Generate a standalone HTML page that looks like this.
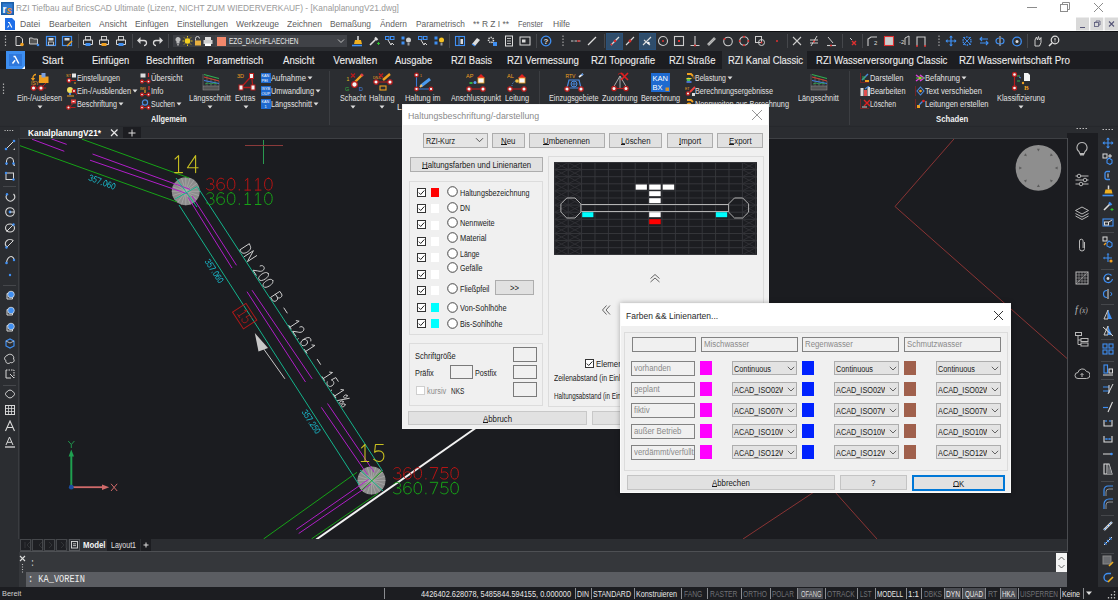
<!DOCTYPE html>
<html><head><meta charset="utf-8">
<style>
html,body{margin:0;padding:0;}
body{width:1118px;height:600px;overflow:hidden;position:relative;background:#1b1c20;font-family:"Liberation Sans",sans-serif;}
.r{position:absolute;}
.t{position:absolute;white-space:nowrap;line-height:1;transform-origin:0 0;}
svg{position:absolute;overflow:hidden;}
</style></head><body>
<div class="r" style="left:0px;top:0px;width:1118px;height:31px;background:#ffffff;"></div>
<svg style="left:1px;top:2px" width="13" height="13" viewBox="0 0 13 13"><rect x="0" y="0" width="13" height="13" fill="#1d5fa8"/><rect x="1.5" y="1.5" width="10" height="10" fill="#2f7bd0"/><text x="1.5" y="11" font-family="Liberation Sans" font-weight="bold" font-size="10" fill="#fff">r</text><text x="5.5" y="11.5" font-family="Liberation Sans" font-weight="bold" font-style="italic" font-size="10" fill="#f08a20">s</text></svg>
<div class="t" style="left:16.0px;top:3.9px;font-size:9px;color:#9a9a9a;transform:scaleX(0.931);">RZI Tiefbau auf BricsCAD Ultimate (Lizenz, NICHT ZUM WIEDERVERKAUF) - [KanalplanungV21.dwg]</div>
<svg style="left:1020px;top:0px" width="98" height="16" viewBox="0 0 98 16"><line x1="7" y1="7.5" x2="17" y2="7.5" stroke="#8c8c8c" stroke-width="1"/><rect x="40.5" y="4.5" width="7" height="7" fill="none" stroke="#8c8c8c"/><path d="M42.5 4.5V2.5h7v7h-2" fill="none" stroke="#8c8c8c"/><path d="M74 3l9 9M83 3l-9 9" stroke="#8c8c8c" stroke-width="1"/></svg>
<svg style="left:5px;top:18px" width="10" height="12" viewBox="0 0 10 12"><path d="M0 0h7l3 3v9H0z" fill="#1e6ee8"/><path d="M2.5 9.5l1.6-2M3 4.5h1.2l2.6 5" stroke="#fff" stroke-width="1.1" fill="none"/></svg>
<div class="t" style="left:20.2px;top:20.3px;font-size:9px;color:#606060;transform:scaleX(0.957);">Datei</div>
<div class="t" style="left:49.0px;top:20.3px;font-size:9px;color:#606060;transform:scaleX(0.958);">Bearbeiten</div>
<div class="t" style="left:98.7px;top:20.3px;font-size:9px;color:#606060;transform:scaleX(0.945);">Ansicht</div>
<div class="t" style="left:135.0px;top:20.3px;font-size:9px;color:#606060;transform:scaleX(0.943);">Einfügen</div>
<div class="t" style="left:177.0px;top:20.3px;font-size:9px;color:#606060;transform:scaleX(0.944);">Einstellungen</div>
<div class="t" style="left:236.0px;top:20.3px;font-size:9px;color:#606060;transform:scaleX(0.948);">Werkzeuge</div>
<div class="t" style="left:287.0px;top:20.3px;font-size:9px;color:#606060;transform:scaleX(0.945);">Zeichnen</div>
<div class="t" style="left:330.0px;top:20.3px;font-size:9px;color:#606060;transform:scaleX(0.931);">Bemaßung</div>
<div class="t" style="left:380.0px;top:20.3px;font-size:9px;color:#606060;transform:scaleX(0.930);">Ändern</div>
<div class="t" style="left:416.0px;top:20.3px;font-size:9px;color:#606060;transform:scaleX(0.924);">Parametrisch</div>
<div class="t" style="left:473.0px;top:20.3px;font-size:9px;color:#606060;transform:scaleX(0.935);">** R Z I **</div>
<div class="t" style="left:518.0px;top:20.3px;font-size:9px;color:#606060;transform:scaleX(0.819);">Fenster</div>
<div class="t" style="left:553.0px;top:20.3px;font-size:9px;color:#606060;transform:scaleX(0.944);">Hilfe</div>
<svg style="left:1076px;top:17px" width="42" height="14" viewBox="0 0 42 14"><rect x="0" y="0.5" width="13" height="13" fill="#d9d9d9"/><rect x="14.3" y="0.5" width="13" height="13" fill="#d9d9d9"/><rect x="28.6" y="0.5" width="13.4" height="13" fill="#d9d9d9"/><line x1="4" y1="10.5" x2="9" y2="10.5" stroke="#557" stroke-width="1"/><rect x="18.5" y="5.5" width="4" height="4" fill="none" stroke="#557" stroke-width="0.8"/><path d="M20 5.5V4h4v4h-1.5" fill="none" stroke="#557" stroke-width="0.8"/><path d="M33 4.5l5 5M38 4.5l-5 5" stroke="#557" stroke-width="1.1"/></svg>
<div class="r" style="left:0px;top:31px;width:1118px;height:20px;background:#2b2d31;"></div>
<div class="r" style="left:0px;top:31px;width:1118px;height:1px;background:#0e0f12;"></div>
<div class="r" style="left:0px;top:51px;width:1118px;height:18px;background:#1c1d21;"></div>
<div class="r" style="left:6px;top:51px;width:19px;height:18px;background:#3d8ef0;"></div>
<svg style="left:6px;top:51px" width="19" height="18" viewBox="0 0 19 18"><rect x="3" y="3" width="13" height="12" fill="#2f78dc"/><path d="M6.5 12.5l2.6-3.2M7.5 5.5h1.5l3.8 7" stroke="#fff" stroke-width="1.5" fill="none"/><path d="M19 15v3h-3z" fill="#fff"/></svg>
<div class="t" style="left:41.6px;top:56.3px;font-size:10px;color:#ececec;transform:scaleX(1.013);-webkit-text-stroke:0.1px #ececec;">Start</div>
<div class="t" style="left:91.6px;top:56.3px;font-size:10px;color:#ececec;transform:scaleX(0.942);-webkit-text-stroke:0.1px #ececec;">Einfügen</div>
<div class="t" style="left:145.6px;top:56.3px;font-size:10px;color:#ececec;transform:scaleX(0.968);-webkit-text-stroke:0.1px #ececec;">Beschriften</div>
<div class="t" style="left:206.7px;top:56.3px;font-size:10px;color:#ececec;transform:scaleX(0.956);-webkit-text-stroke:0.1px #ececec;">Parametrisch</div>
<div class="t" style="left:282.8px;top:56.3px;font-size:10px;color:#ececec;transform:scaleX(0.957);-webkit-text-stroke:0.1px #ececec;">Ansicht</div>
<div class="t" style="left:333.3px;top:56.3px;font-size:10px;color:#ececec;-webkit-text-stroke:0.1px #ececec;">Verwalten</div>
<div class="t" style="left:394.9px;top:56.3px;font-size:10px;color:#ececec;transform:scaleX(0.942);-webkit-text-stroke:0.1px #ececec;">Ausgabe</div>
<div class="t" style="left:451.0px;top:56.3px;font-size:10px;color:#ececec;transform:scaleX(0.946);-webkit-text-stroke:0.1px #ececec;">RZI Basis</div>
<div class="t" style="left:506.5px;top:56.3px;font-size:10px;color:#ececec;transform:scaleX(0.965);-webkit-text-stroke:0.1px #ececec;">RZI Vermessung</div>
<div class="t" style="left:591.2px;top:56.3px;font-size:10px;color:#ececec;transform:scaleX(0.980);-webkit-text-stroke:0.1px #ececec;">RZI Topografie</div>
<div class="t" style="left:668.6px;top:56.3px;font-size:10px;color:#ececec;transform:scaleX(0.951);-webkit-text-stroke:0.1px #ececec;">RZI Straße</div>
<div class="r" style="left:722px;top:51px;width:85px;height:18px;background:#2b2d31;"></div>
<div class="t" style="left:727.9px;top:56.3px;font-size:10px;color:#ececec;transform:scaleX(0.945);-webkit-text-stroke:0.1px #ececec;">RZI Kanal Classic</div>
<div class="t" style="left:815.6px;top:56.3px;font-size:10px;color:#ececec;transform:scaleX(0.956);-webkit-text-stroke:0.1px #ececec;">RZI Wasserversorgung Classic</div>
<div class="t" style="left:959.3px;top:56.3px;font-size:10px;color:#ececec;transform:scaleX(0.982);-webkit-text-stroke:0.1px #ececec;">RZI Wasserwirtschaft Pro</div>
<div class="r" style="left:0px;top:69px;width:1118px;height:57px;background:#2b2d31;"></div>
<div class="r" style="left:0px;top:125px;width:1118px;height:13px;background:#2a2c30;"></div>
<div class="r" style="left:0px;top:125.5px;width:1118px;height:1px;background:#26282c;"></div>
<svg style="left:2px;top:83px" width="3" height="12" viewBox="0 0 3 12"><path d="M1.5 0.5v1.5M1.5 3.5v1.5M1.5 6.5v1.5M1.5 9.5v1.5" stroke="#aaa" stroke-width="1.2"/></svg>
<div class="t" style="left:17.0px;top:93.8px;font-size:8.5px;color:#e2e2e2;transform:scaleX(0.858);">Ein-/Auslesen</div>
<svg style="left:36.5px;top:105px" width="6" height="4" viewBox="0 0 6 4"><path d="M0.5 0.5h5l-2.5 3z" fill="#ddd"/></svg>
<div class="t" style="left:77.0px;top:74.3px;font-size:8.5px;color:#e2e2e2;transform:scaleX(0.842);">Einstellungen</div>
<div class="t" style="left:77.0px;top:87.2px;font-size:8.5px;color:#e2e2e2;transform:scaleX(0.866);">Ein-/Ausblenden</div>
<svg style="left:132.0px;top:89.3px" width="6" height="4" viewBox="0 0 6 4"><path d="M0.5 0.5h5l-2.5 3z" fill="#ddd"/></svg>
<div class="t" style="left:77.0px;top:100.1px;font-size:8.5px;color:#e2e2e2;transform:scaleX(0.847);">Beschriftung</div>
<svg style="left:118.0px;top:102.2px" width="6" height="4" viewBox="0 0 6 4"><path d="M0.5 0.5h5l-2.5 3z" fill="#ddd"/></svg>
<div class="t" style="left:151.0px;top:74.3px;font-size:8.5px;color:#e2e2e2;transform:scaleX(0.877);">Übersicht</div>
<div class="t" style="left:151.0px;top:87.2px;font-size:8.5px;color:#e2e2e2;transform:scaleX(0.882);">Info</div>
<div class="t" style="left:151.0px;top:100.1px;font-size:8.5px;color:#e2e2e2;transform:scaleX(0.832);">Suchen</div>
<svg style="left:176.0px;top:102.2px" width="6" height="4" viewBox="0 0 6 4"><path d="M0.5 0.5h5l-2.5 3z" fill="#ddd"/></svg>
<div class="t" style="left:150.5px;top:115.2px;font-size:8.5px;color:#f0f0f0;font-weight:bold;transform:scaleX(0.874);">Allgemein</div>
<div class="t" style="left:189.0px;top:93.8px;font-size:8.5px;color:#e2e2e2;transform:scaleX(0.876);">Längsschnitt</div>
<svg style="left:206.9px;top:105px" width="6" height="4" viewBox="0 0 6 4"><path d="M0.5 0.5h5l-2.5 3z" fill="#ddd"/></svg>
<div class="t" style="left:235.4px;top:93.8px;font-size:8.5px;color:#e2e2e2;transform:scaleX(0.847);">Extras</div>
<svg style="left:242.6px;top:105px" width="6" height="4" viewBox="0 0 6 4"><path d="M0.5 0.5h5l-2.5 3z" fill="#ddd"/></svg>
<div class="t" style="left:271.0px;top:74.3px;font-size:8.5px;color:#e2e2e2;transform:scaleX(0.903);">Aufnahme</div>
<svg style="left:307.0px;top:76.4px" width="6" height="4" viewBox="0 0 6 4"><path d="M0.5 0.5h5l-2.5 3z" fill="#ddd"/></svg>
<div class="t" style="left:271.0px;top:87.2px;font-size:8.5px;color:#e2e2e2;transform:scaleX(0.867);">Umwandlung</div>
<svg style="left:315.0px;top:89.3px" width="6" height="4" viewBox="0 0 6 4"><path d="M0.5 0.5h5l-2.5 3z" fill="#ddd"/></svg>
<div class="t" style="left:271.0px;top:100.1px;font-size:8.5px;color:#e2e2e2;transform:scaleX(0.859);">Längsschnitt</div>
<svg style="left:313.0px;top:102.2px" width="6" height="4" viewBox="0 0 6 4"><path d="M0.5 0.5h5l-2.5 3z" fill="#ddd"/></svg>
<div class="r" style="left:329px;top:71px;width:1px;height:54px;background:#3c3e42;"></div>
<div class="t" style="left:340.0px;top:93.8px;font-size:8.5px;color:#e2e2e2;transform:scaleX(0.847);">Schacht</div>
<svg style="left:350.0px;top:105px" width="6" height="4" viewBox="0 0 6 4"><path d="M0.5 0.5h5l-2.5 3z" fill="#ddd"/></svg>
<div class="t" style="left:369.0px;top:93.8px;font-size:8.5px;color:#e2e2e2;transform:scaleX(0.874);">Haltung</div>
<svg style="left:378.8px;top:105px" width="6" height="4" viewBox="0 0 6 4"><path d="M0.5 0.5h5l-2.5 3z" fill="#ddd"/></svg>
<div class="t" style="left:404.5px;top:93.8px;font-size:8.5px;color:#e2e2e2;transform:scaleX(0.874);">Haltung im</div>
<div class="t" style="left:397.2px;top:103.4px;font-size:8.5px;color:#e2e2e2;transform:scaleX(1.015);">L</div>
<div class="t" style="left:451.0px;top:93.8px;font-size:8.5px;color:#e2e2e2;transform:scaleX(0.840);">Anschlusspunkt</div>
<div class="t" style="left:504.7px;top:93.8px;font-size:8.5px;color:#e2e2e2;transform:scaleX(0.864);">Leitung</div>
<div class="r" style="left:538.6px;top:71px;width:1px;height:54px;background:#3c3e42;"></div>
<div class="t" style="left:549.0px;top:93.8px;font-size:8.5px;color:#e2e2e2;transform:scaleX(0.853);">Einzugsgebiete</div>
<div class="t" style="left:602.0px;top:93.8px;font-size:8.5px;color:#e2e2e2;transform:scaleX(0.866);">Zuordnung</div>
<div class="t" style="left:641.0px;top:93.8px;font-size:8.5px;color:#e2e2e2;transform:scaleX(0.851);">Berechnung</div>
<div class="t" style="left:695.0px;top:74.3px;font-size:8.5px;color:#e2e2e2;transform:scaleX(0.820);">Belastung</div>
<svg style="left:727.0px;top:76.4px" width="6" height="4" viewBox="0 0 6 4"><path d="M0.5 0.5h5l-2.5 3z" fill="#ddd"/></svg>
<div class="t" style="left:695.0px;top:87.2px;font-size:8.5px;color:#e2e2e2;transform:scaleX(0.851);">Berechnungsergebnisse</div>
<div class="t" style="left:695.0px;top:100.1px;font-size:8.5px;color:#e2e2e2;transform:scaleX(0.861);">Nennweiten aus Berechnung</div>
<div class="t" style="left:798.0px;top:93.8px;font-size:8.5px;color:#e2e2e2;transform:scaleX(0.855);">Längsschnitt</div>
<div class="r" style="left:848.7px;top:71px;width:1px;height:54px;background:#3c3e42;"></div>
<div class="t" style="left:870.0px;top:74.3px;font-size:8.5px;color:#e2e2e2;transform:scaleX(0.873);">Darstellen</div>
<div class="t" style="left:870.0px;top:87.2px;font-size:8.5px;color:#e2e2e2;transform:scaleX(0.863);">Bearbeiten</div>
<div class="t" style="left:870.0px;top:100.1px;font-size:8.5px;color:#e2e2e2;transform:scaleX(0.809);">Löschen</div>
<div class="t" style="left:925.0px;top:74.3px;font-size:8.5px;color:#e2e2e2;transform:scaleX(0.892);">Befahrung</div>
<svg style="left:961.0px;top:76.4px" width="6" height="4" viewBox="0 0 6 4"><path d="M0.5 0.5h5l-2.5 3z" fill="#ddd"/></svg>
<div class="t" style="left:925.0px;top:87.2px;font-size:8.5px;color:#e2e2e2;transform:scaleX(0.894);">Text verschieben</div>
<div class="t" style="left:925.0px;top:100.1px;font-size:8.5px;color:#e2e2e2;transform:scaleX(0.884);">Leitungen erstellen</div>
<div class="t" style="left:996.7px;top:93.8px;font-size:8.5px;color:#e2e2e2;transform:scaleX(0.872);">Klassifizierung</div>
<svg style="left:1017.6px;top:105px" width="6" height="4" viewBox="0 0 6 4"><path d="M0.5 0.5h5l-2.5 3z" fill="#ddd"/></svg>
<div class="t" style="left:935.8px;top:115.2px;font-size:8.5px;color:#f0f0f0;font-weight:bold;transform:scaleX(0.909);">Schaden</div>
<svg style="left:4px;top:128.5px" width="10" height="3" viewBox="0 0 10 3"><path d="M0.5 1.5h1.2M3 1.5h1.2M5.5 1.5h1.2M8 1.5h1.2" stroke="#bbb" stroke-width="1.1"/></svg>
<div class="r" style="left:20px;top:127px;width:98px;height:11px;background:#2e3034;"></div>
<div class="t" style="left:27.5px;top:129.0px;font-size:8.5px;color:#ffffff;font-weight:bold;transform:scaleX(0.978);">KanalplanungV21*</div>
<svg style="left:108px;top:127px" width="38" height="11" viewBox="0 0 38 11"><path d="M3 2.5l6.5 6.5M9.5 2.5L3 9" stroke="#e8e8e8" stroke-width="1.2"/><rect x="15" y="0" width="18" height="11" fill="#1c1d21"/><path d="M24 2.5v7M20.5 6h7" stroke="#ddd" stroke-width="1"/></svg>
<svg style="left:4.0px;top:35.0px" width="3" height="12" viewBox="0 0 3 12"><path d="M1.5 0.5v1.5M1.5 3.5v1.5M1.5 6.5v1.5M1.5 9.5v1.5" stroke="#aaa" stroke-width="1.2"/></svg>
<svg style="left:12.5px;top:35.0px" width="12" height="12" viewBox="0 0 12 12"><path d="M3 1.5h4l2.5 2.5v6.5H3z" stroke="#d8d8d8" fill="none"/><circle cx="9" cy="9.5" r="1.8" fill="#f0a020"/></svg>
<svg style="left:27.5px;top:35.0px" width="12" height="12" viewBox="0 0 12 12"><path d="M1.5 3h3l1 1h4v5h-8z" stroke="#d8d8d8" fill="#555" stroke-width="0.9"/><circle cx="10" cy="10" r="1.3" fill="#3f8ff2"/></svg>
<svg style="left:44.5px;top:35.0px" width="12" height="12" viewBox="0 0 12 12"><rect x="1.5" y="1.5" width="9" height="9" stroke="#3f8ff2" stroke-width="1.2" fill="none"/><rect x="3.5" y="3" width="5" height="2.5" fill="#d8d8d8"/><rect x="3.5" y="7" width="5" height="3" stroke="#d8d8d8" fill="none" stroke-width="0.8"/></svg>
<svg style="left:60.5px;top:35.0px" width="12" height="12" viewBox="0 0 12 12"><rect x="1.5" y="1.5" width="9" height="9" stroke="#3f8ff2" stroke-width="1.2" fill="none"/><rect x="3.5" y="3" width="5" height="2.5" fill="#d8d8d8"/><path d="M6 11l5-5" stroke="#f0a020" stroke-width="1.5"/></svg>
<div class="r" style="left:77.5px;top:34px;width:1px;height:14px;background:#45474b;"></div>
<svg style="left:82.0px;top:35.0px" width="12" height="12" viewBox="0 0 12 12"><rect x="3.5" y="1.5" width="5" height="3.5" stroke="#d8d8d8" fill="none" stroke-width="0.9"/><path d="M1.5 5h9v4.5h-9z" stroke="#d8d8d8" fill="none" stroke-width="1"/><rect x="3.5" y="8" width="5" height="3" fill="#3f8ff2"/></svg>
<svg style="left:98.0px;top:35.0px" width="12" height="12" viewBox="0 0 12 12"><rect x="3.5" y="1.5" width="5" height="3.5" stroke="#d8d8d8" fill="none" stroke-width="0.9"/><path d="M1.5 5h9v4.5h-9z" stroke="#d8d8d8" fill="none" stroke-width="1"/><rect x="3.5" y="8" width="5" height="3" fill="#f0a020"/></svg>
<svg style="left:114.5px;top:35.0px" width="12" height="12" viewBox="0 0 12 12"><rect x="3.5" y="1.5" width="5" height="3.5" stroke="#d8d8d8" fill="none" stroke-width="0.9"/><path d="M1.5 5h9v4.5h-9z" stroke="#d8d8d8" fill="none" stroke-width="1"/><rect x="3.5" y="8" width="5" height="3" fill="#3f8ff2"/></svg>
<div class="r" style="left:131.5px;top:34px;width:1px;height:14px;background:#45474b;"></div>
<svg style="left:135.5px;top:35.0px" width="12" height="12" viewBox="0 0 12 12"><path d="M3 5.5h5a2.5 2.5 0 0 1 0 5" stroke="#d8d8d8" stroke-width="1.3" fill="none"/><path d="M1 5.5l3.5-3.5v7z" fill="#d8d8d8"/></svg>
<svg style="left:151.5px;top:35.0px" width="12" height="12" viewBox="0 0 12 12"><path d="M9 5.5H4a2.5 2.5 0 0 0 0 5" stroke="#d8d8d8" stroke-width="1.3" fill="none"/><path d="M11 5.5l-3.5-3.5v7z" fill="#d8d8d8"/></svg>
<div class="r" style="left:168px;top:34px;width:1px;height:14px;background:#45474b;"></div>
<div class="r" style="left:173.4px;top:35.4px;width:173.6px;height:11.6px;background:#3b3d42;"></div>
<div class="r" style="left:215px;top:35.4px;width:132px;height:11.6px;background:#404247;"></div>
<svg style="left:172.0px;top:35.0px" width="44" height="12" viewBox="0 0 44 12"><path d="M5.5 2a2.5 2.5 0 0 1 2 4.5v2h-3v-2a2.5 2.5 0 0 1 1-4.5z" fill="#bbb"/><rect x="5" y="9" width="2" height="1.5" fill="#999"/><circle cx="15.5" cy="6" r="2.8" fill="#f5d020"/><path d="M15.5 1v1.5M15.5 9.5v1.5M10.5 6h1.5M19 6h1.5M12 2.5l1 1M18 8.5l1 1M19 2.5l-1 1M12 9.5l1-1" stroke="#f5d020" stroke-width="0.9"/><rect x="23" y="5.5" width="6" height="5" fill="#e8b040"/><path d="M23.5 5.5v-2a2 2 0 0 1 4 0" stroke="#ddd" fill="none" stroke-width="0.9"/><rect x="33" y="2" width="6" height="3" fill="#ddd"/><rect x="31.5" y="5" width="9" height="4" fill="#cfcfcf"/><rect x="33" y="8.5" width="6" height="2.5" fill="#fff"/></svg>
<div class="r" style="left:217px;top:37px;width:9px;height:9px;background:#f2886c;"></div>
<div class="t" style="left:229.4px;top:37.9px;font-size:8.2px;color:#e8e8e8;transform:scaleX(0.787);">EZG_DACHFLAECHEN</div>
<svg style="left:337.0px;top:38.0px" width="8" height="6" viewBox="0 0 8 6"><path d="M1 1.5l3 3 3-3" stroke="#ccc" stroke-width="0.9" fill="none"/></svg>
<svg style="left:351.4px;top:35.0px" width="12" height="12" viewBox="0 0 12 12"><path d="M7 1v4" stroke="#ddd" stroke-width="1.5"/><path d="M4 5h6l1 4H3z" fill="#f0b020"/><path d="M1 10.5h10" stroke="#3f8ff2" stroke-width="1.6"/></svg>
<svg style="left:367.7px;top:35.0px" width="12" height="12" viewBox="0 0 12 12"><path d="M2 10l6-6" stroke="#ddd" stroke-width="1.6"/><path d="M7 2.5l2.5 2.5" stroke="#ddd" stroke-width="2.2"/><path d="M9 8.5h3M10.5 7v3" stroke="#30c030" stroke-width="1"/></svg>
<svg style="left:384.0px;top:35.0px" width="12" height="12" viewBox="0 0 12 12"><rect x="1.5" y="1.5" width="3.5" height="3" fill="none" stroke="#3f8ff2"/><rect x="6.5" y="1.5" width="3.5" height="3" fill="none" stroke="#3f8ff2"/><path d="M4 5l3 5 1-2 2 2" stroke="#d8d8d8" fill="none"/></svg>
<svg style="left:400.0px;top:35.0px" width="12" height="12" viewBox="0 0 12 12"><rect x="1.5" y="1.5" width="3" height="3" fill="#3f8ff2"/><rect x="1.5" y="6.5" width="3" height="3" fill="#3f8ff2"/><circle cx="8.5" cy="5" r="2.5" fill="#ccc"/><rect x="7.5" y="8" width="2" height="2.5" fill="#999"/></svg>
<svg style="left:417.0px;top:35.0px" width="12" height="12" viewBox="0 0 12 12"><rect x="1.5" y="1.5" width="3.5" height="3" fill="none" stroke="#3f8ff2"/><rect x="6.5" y="1.5" width="3.5" height="3" fill="none" stroke="#3f8ff2"/><path d="M4 5l3 5 1-2 2 2" stroke="#d8d8d8" fill="none"/></svg>
<svg style="left:432.8px;top:35.0px" width="12" height="12" viewBox="0 0 12 12"><rect x="1.5" y="1.5" width="3" height="3" fill="#3f8ff2"/><rect x="1.5" y="6.5" width="3" height="3" fill="#3f8ff2"/><circle cx="8.5" cy="5" r="2.5" fill="#f5c020"/><rect x="7.5" y="8" width="2" height="2.5" fill="#999"/></svg>
<div class="r" style="left:449.3px;top:34px;width:1px;height:14px;background:#45474b;"></div>
<svg style="left:453.8px;top:35.0px" width="12" height="12" viewBox="0 0 12 12"><rect x="1.5" y="1.5" width="9" height="9" fill="none" stroke="#3f8ff2" stroke-width="1.1"/><path d="M5 2v8" stroke="#3f8ff2"/><rect x="6.5" y="4" width="2.5" height="5" fill="#ddd"/></svg>
<svg style="left:470.0px;top:35.0px" width="12" height="12" viewBox="0 0 12 12"><path d="M2 9l5-6 3 2-5 6z" fill="#ddd"/><path d="M2 9l3 2" stroke="#3f8ff2" stroke-width="1.2"/></svg>
<svg style="left:486.3px;top:35.0px" width="12" height="12" viewBox="0 0 12 12"><circle cx="5" cy="5" r="2.5" fill="none" stroke="#ddd" stroke-width="1.6" stroke-dasharray="1.3 0.9"/><rect x="7" y="7" width="4" height="4" fill="#3f8ff2"/></svg>
<svg style="left:502.6px;top:35.0px" width="12" height="12" viewBox="0 0 12 12"><rect x="2.5" y="1" width="7" height="10" fill="none" stroke="#ddd"/><path d="M4 3.5h4M4 6h4M4 8.5h4" stroke="#ddd" stroke-width="0.8"/></svg>
<svg style="left:519.0px;top:35.0px" width="12" height="12" viewBox="0 0 12 12"><rect x="1" y="2" width="10" height="8" fill="none" stroke="#ddd"/><rect x="3" y="4.5" width="3.5" height="3" fill="#ddd"/></svg>
<div class="r" style="left:535.8px;top:34px;width:1px;height:14px;background:#45474b;"></div>
<svg style="left:539.8px;top:35.0px" width="12" height="12" viewBox="0 0 12 12"><circle cx="6" cy="6" r="4.8" fill="none" stroke="#3f8ff2" stroke-width="1.3"/><text x="6" y="8.8" font-size="8" font-weight="bold" fill="#ddd" text-anchor="middle" font-family="Liberation Sans">?</text></svg>
<svg style="left:562.0px;top:35.0px" width="2" height="12" viewBox="0 0 2 12"><path d="M1 0.5v1.5M1 3.5v1.5M1 6.5v1.5M1 9.5v1.5" stroke="#aaa" stroke-width="1.1"/></svg>
<svg style="left:570.0px;top:35.0px" width="12" height="12" viewBox="0 0 12 12"><path d="M1 6h10" stroke="#ccc" stroke-width="1" stroke-dasharray="2.5 1"/><path d="M7 6h3" stroke="#e03030" stroke-width="1.2"/></svg>
<svg style="left:586.0px;top:35.0px" width="12" height="12" viewBox="0 0 12 12"><path d="M2 10L10 2" stroke="#ddd" stroke-width="1.3"/></svg>
<div class="r" style="left:604px;top:34px;width:1px;height:14px;background:#45474b;"></div>
<div class="r" style="left:606px;top:33px;width:17px;height:17px;background:#2f4d6b;border:1px solid #2a5078;box-sizing:border-box;"></div>
<svg style="left:608.5px;top:35.0px" width="12" height="12" viewBox="0 0 12 12"><path d="M2 10L10 2" stroke="#ddd" stroke-width="1.2"/><circle cx="6" cy="6" r="1.3" fill="#e03030"/><circle cx="2.5" cy="9.5" r="1" fill="#e03030"/></svg>
<svg style="left:624.0px;top:35.0px" width="12" height="12" viewBox="0 0 12 12"><path d="M2 10L10 2" stroke="#ddd" stroke-width="1.1"/><circle cx="6" cy="6" r="1.4" fill="#e03030"/></svg>
<div class="r" style="left:638.8px;top:33px;width:17px;height:17px;background:#2f4d6b;border:1px solid #2a5078;box-sizing:border-box;"></div>
<svg style="left:641.0px;top:35.0px" width="12" height="12" viewBox="0 0 12 12"><path d="M2 10L10 2M3 5l6 5" stroke="#ddd" stroke-width="1.1"/><circle cx="7.5" cy="8" r="1.2" fill="#fff"/></svg>
<svg style="left:656.6px;top:35.0px" width="12" height="12" viewBox="0 0 12 12"><circle cx="6" cy="6" r="4.5" fill="none" stroke="#ccc" stroke-width="1.1"/><circle cx="6" cy="6" r="1" fill="#e03030"/></svg>
<svg style="left:672.8px;top:35.0px" width="12" height="12" viewBox="0 0 12 12"><rect x="1.5" y="1.5" width="9" height="9" fill="none" stroke="#ccc" stroke-width="1.1"/><rect x="5" y="5" width="2" height="2" fill="#e03030"/></svg>
<svg style="left:689.0px;top:35.0px" width="12" height="12" viewBox="0 0 12 12"><path d="M6 1v9M1.5 10.5h9" stroke="#ccc" stroke-width="1.1"/><circle cx="6" cy="10.5" r="1" fill="#e03030"/></svg>
<svg style="left:705.4px;top:35.0px" width="12" height="12" viewBox="0 0 12 12"><path d="M2.5 9.5l7-7M3.5 10.5l7-7" stroke="#bbb" stroke-width="1.3"/></svg>
<svg style="left:722.4px;top:35.0px" width="12" height="12" viewBox="0 0 12 12"><circle cx="6" cy="6.5" r="4.3" fill="none" stroke="#ccc" stroke-width="1.1"/><circle cx="2.5" cy="4" r="1" fill="#e03030"/></svg>
<svg style="left:738.0px;top:35.0px" width="12" height="12" viewBox="0 0 12 12"><circle cx="6" cy="6" r="4.3" fill="none" stroke="#ccc" stroke-width="1.1"/><circle cx="6" cy="1.7" r="1" fill="#e03030"/><circle cx="1.7" cy="6" r="1" fill="#e03030"/><circle cx="10.3" cy="6" r="1" fill="#e03030"/><circle cx="6" cy="10.3" r="1" fill="#e03030"/></svg>
<svg style="left:754.0px;top:35.0px" width="12" height="12" viewBox="0 0 12 12"><rect x="1.5" y="1.5" width="6" height="6" fill="none" stroke="#ccc"/><circle cx="7.5" cy="7.5" r="3" fill="none" stroke="#ccc"/><circle cx="7.5" cy="7.5" r="0.9" fill="#e03030"/></svg>
<svg style="left:770.5px;top:35.0px" width="12" height="12" viewBox="0 0 12 12"><circle cx="6" cy="6" r="1" fill="#e03030"/></svg>
<div class="r" style="left:787px;top:34px;width:1px;height:14px;background:#45474b;"></div>
<svg style="left:791.4px;top:35.0px" width="12" height="12" viewBox="0 0 12 12"><path d="M2 2l8 8M10 2L2 10" stroke="#ccc" stroke-width="1.1"/></svg>
<svg style="left:807.7px;top:35.0px" width="12" height="12" viewBox="0 0 12 12"><path d="M3 11L9 1M2 5h8M2 8h8" stroke="#ccc" stroke-width="1"/><circle cx="6" cy="6.5" r="1" fill="#e03030"/></svg>
<svg style="left:824.7px;top:35.0px" width="12" height="12" viewBox="0 0 12 12"><path d="M2 10.5h9" stroke="#ccc" stroke-width="1.1"/><path d="M3 2l5 6" stroke="#ccc"/><circle cx="6" cy="10.5" r="1" fill="#e03030"/></svg>
<div class="r" style="left:842px;top:34px;width:1px;height:14px;background:#45474b;"></div>
<svg style="left:847.0px;top:35.0px" width="12" height="12" viewBox="0 0 12 12"><path d="M3 3l2 2" stroke="#ccc"/><path d="M5 6l4 4M9 6l-4 4" stroke="#e03030" stroke-width="1.4"/></svg>
<div class="r" style="left:862.4px;top:34px;width:1px;height:14px;background:#45474b;"></div>
<svg style="left:866.3px;top:35.0px" width="12" height="12" viewBox="0 0 12 12"><path d="M2 11V4l3-2h6" stroke="#ccc" stroke-width="1.1" fill="none"/><text x="8" y="10" font-size="6" fill="#ddd" font-family="Liberation Sans">2</text></svg>
<svg style="left:882.5px;top:35.0px" width="12" height="12" viewBox="0 0 12 12"><rect x="1.5" y="1.5" width="9" height="9" fill="#ccc" stroke="#e03030" stroke-width="1.1"/></svg>
<svg style="left:898.7px;top:35.0px" width="12" height="12" viewBox="0 0 12 12"><path d="M6 10V3l4-2v9" stroke="#ccc" fill="none"/><text x="0" y="9" font-size="6" fill="#ddd" font-family="Liberation Sans">-2</text></svg>
<svg style="left:914.8px;top:35.0px" width="12" height="12" viewBox="0 0 12 12"><path d="M2 11V2h8v9" stroke="#ccc" stroke-width="1.1" fill="none"/><circle cx="2" cy="11" r="1" fill="#e03030"/><circle cx="10" cy="11" r="1" fill="#e03030"/></svg>
<svg style="left:938.0px;top:35.0px" width="2" height="12" viewBox="0 0 2 12"><path d="M1 0.5v1.5M1 3.5v1.5M1 6.5v1.5M1 9.5v1.5" stroke="#aaa" stroke-width="1.1"/></svg>
<svg style="left:945.4px;top:35.0px" width="12" height="12" viewBox="0 0 12 12"><path d="M6 1v10M1 6h10" stroke="#3f8ff2" stroke-width="1.2"/><path d="M6 0.5l-2 2h4zM6 11.5l-2-2h4zM0.5 6l2-2v4zM11.5 6l-2-2v4z" fill="#3f8ff2"/></svg>
<svg style="left:961.4px;top:35.0px" width="12" height="12" viewBox="0 0 12 12"><circle cx="6" cy="6" r="4" fill="none" stroke="#3f8ff2" stroke-width="1.3" stroke-dasharray="1.5 1"/><path d="M2 2l8 8M10 2L2 10" stroke="#3f8ff2" stroke-width="0.9"/></svg>
<svg style="left:977.8px;top:35.0px" width="12" height="12" viewBox="0 0 12 12"><path d="M2 4h8M2 8h8M4 2L2 4l2 2M8 6l2 2-2 2" stroke="#3f8ff2" stroke-width="1.1" fill="none"/></svg>
<svg style="left:994.0px;top:35.0px" width="12" height="12" viewBox="0 0 12 12"><path d="M6 1v10" stroke="#ccc"/><path d="M2 6a4 3 0 0 0 8 0" stroke="#3f8ff2" stroke-width="1.2" fill="none"/><path d="M2 6a4 3 0 0 1 3-3M10 6a4 3 0 0 0-3-3" stroke="#3f8ff2" stroke-width="1.2" fill="none"/></svg>
<svg style="left:1010.6px;top:35.0px" width="12" height="12" viewBox="0 0 12 12"><circle cx="6" cy="6.5" r="4.3" fill="none" stroke="#3f8ff2" stroke-width="1.3"/><circle cx="6" cy="6.5" r="1.5" fill="#ddd"/></svg>
<div class="r" style="left:1027px;top:34px;width:1px;height:14px;background:#45474b;"></div>
<svg style="left:1031.8px;top:35.0px" width="12" height="12" viewBox="0 0 12 12"><path d="M3 11V5l1.5-3 1 3 1-3.5 1 3.5 1.5-2.5v5l-1.5 3.5z" fill="none" stroke="#ccc" stroke-width="1"/></svg>
<svg style="left:1048.0px;top:35.0px" width="12" height="12" viewBox="0 0 12 12"><circle cx="7" cy="5" r="3.8" fill="none" stroke="#ddd" stroke-width="1.2"/><path d="M4 8l-3 3" stroke="#ddd" stroke-width="1.6"/><path d="M7 3v2.5M7 6.5v0.8" stroke="#ddd" stroke-width="1.1"/></svg>
<svg style="left:30.0px;top:72.0px" width="20" height="20" viewBox="0 0 20 20"><path d="M6 2.5a3 3 0 0 0-3 3v1.5" stroke="#f0a020" stroke-width="1.3" fill="none"/><path d="M0.8 6l2.2 3 2.2-3z" fill="#f0a020"/><path d="M9 3h3l1 1.5h5.5V11H9z" fill="#f0a020"/><rect x="11.5" y="1" width="4" height="4.5" fill="#7aa0e0"/><text x="1" y="13" font-size="5" fill="#f0a020" font-family="Liberation Sans">ISY</text><circle cx="3.5" cy="16" r="2.2" fill="#f4f4f4" stroke="#b81c1c" stroke-width="1.3"/><circle cx="11" cy="16" r="2.2" fill="#f4f4f4" stroke="#b81c1c" stroke-width="1.3"/><path d="M5.7 16h3M13.2 16h3M13 14l3-3" stroke="#b81c1c" stroke-width="1"/></svg>
<svg style="left:201.0px;top:72.0px" width="20" height="20" viewBox="0 0 20 20"><rect x="2" y="14" width="16" height="4" fill="#555" stroke="#888" stroke-width="0.6"/><path d="M2 14V2M6 14V4M10 14V6M14 14V7M18 14V9" stroke="#777" stroke-width="0.6"/><path d="M3 2.5l15 4" stroke="#30b050" stroke-width="1.1"/><path d="M3 5l15 4" stroke="#d04030" stroke-width="1.1"/><path d="M3 8.5l15 3" stroke="#4080e0" stroke-width="1.1"/><path d="M4 12l3-1 3 1 3-1 3 1" stroke="#30b050" stroke-width="0.8" fill="none"/></svg>
<svg style="left:809.0px;top:72.0px" width="20" height="20" viewBox="0 0 20 20"><rect x="2" y="14" width="16" height="4" fill="#555" stroke="#888" stroke-width="0.6"/><path d="M2 14V2M6 14V4M10 14V6M14 14V7M18 14V9" stroke="#777" stroke-width="0.6"/><path d="M3 2.5l15 4" stroke="#30b050" stroke-width="1.1"/><path d="M3 5l15 4" stroke="#d04030" stroke-width="1.1"/><path d="M3 8.5l15 3" stroke="#4080e0" stroke-width="1.1"/><path d="M4 12l3-1 3 1 3-1 3 1" stroke="#30b050" stroke-width="0.8" fill="none"/></svg>
<svg style="left:236.5px;top:72.0px" width="20" height="20" viewBox="0 0 20 20"><text x="0" y="6" font-size="5.5" fill="#f0a020" font-family="Liberation Sans">3D</text><path d="M14.5 4L4 15.5h12z" stroke="#b81c1c" stroke-width="1.3" fill="none"/><rect x="12.5" y="1.5" width="4" height="5" fill="#f4f4f4" stroke="#b81c1c"/><rect x="2" y="13" width="4" height="5" fill="#f4f4f4" stroke="#b81c1c"/><rect x="14" y="13" width="4" height="5" fill="#f4f4f4" stroke="#b81c1c"/></svg>
<svg style="left:344.5px;top:72.0px" width="20" height="20" viewBox="0 0 20 20"><path d="M6 1.5l4 4M10 1.5l-4 4" stroke="#b81c1c" stroke-width="1.2"/><path d="M10 10l7-7" stroke="#f0a020" stroke-width="2.4"/><path d="M16 2l2 2" stroke="#e04040" stroke-width="2.4"/><text x="1.5" y="9" font-size="5" fill="#e0c020" font-family="Liberation Sans">1</text><circle cx="9.5" cy="12.5" r="2.8" fill="#f4f4f4" stroke="#b81c1c" stroke-width="1.3"/><text x="0" y="19" font-size="5.5" fill="#30b040" font-family="Liberation Sans">G</text><text x="14" y="19" font-size="5.5" fill="#4080e0" font-family="Liberation Sans">D</text></svg>
<svg style="left:372.5px;top:72.0px" width="20" height="20" viewBox="0 0 20 20"><path d="M6 1.5l4 4M10 1.5l-4 4" stroke="#b81c1c" stroke-width="1.2"/><path d="M10 8l7-6" stroke="#f0a020" stroke-width="2.4"/><text x="0" y="7" font-size="3.5" fill="#f0a020" font-family="Liberation Sans">DN-L</text><circle cx="3" cy="10" r="2.2" fill="#f4f4f4" stroke="#b81c1c" stroke-width="1.3"/><circle cx="17" cy="10" r="2.2" fill="#f4f4f4" stroke="#b81c1c" stroke-width="1.3"/><path d="M5.2 10h9.6" stroke="#b81c1c" stroke-width="1.1"/><rect x="7" y="14" width="6" height="4" fill="none" stroke="#f0a020" stroke-width="1.1"/></svg>
<svg style="left:414.0px;top:72.0px" width="20" height="20" viewBox="0 0 20 20"><path d="M2.5 3v14h15" stroke="#3a7ad8" stroke-width="1.1" fill="none"/><circle cx="2.5" cy="3" r="1.8" fill="#f4f4f4" stroke="#b81c1c" stroke-width="1.3"/><circle cx="2.5" cy="17" r="1.8" fill="#f4f4f4" stroke="#b81c1c" stroke-width="1.3"/><circle cx="17" cy="17" r="1.8" fill="#f4f4f4" stroke="#b81c1c" stroke-width="1.3"/><path d="M7 14l9-7" stroke="#4a9af0" stroke-width="3"/><path d="M8 13l-2 2" stroke="#f0c070" stroke-width="2"/><text x="6" y="5" font-size="3.5" fill="#f0a020" font-family="Liberation Sans">1</text></svg>
<svg style="left:466.0px;top:72.0px" width="20" height="20" viewBox="0 0 20 20"><text x="0" y="6" font-size="5.5" fill="#f0a020" font-family="Liberation Sans">AP</text><path d="M11 6l4-4 4 4z" fill="#e02020"/><rect x="12" y="6" width="6" height="5" fill="#f4f4f4" stroke="#f0a020" stroke-width="0.8"/><circle cx="3" cy="17" r="2.2" fill="#f4f4f4" stroke="#b81c1c" stroke-width="1.3"/><circle cx="17" cy="17" r="2.2" fill="#f4f4f4" stroke="#b81c1c" stroke-width="1.3"/><path d="M5.2 17h9.6" stroke="#b81c1c" stroke-width="1.1"/><rect x="3.5" y="10" width="3" height="2" fill="#30b040"/><circle cx="9" cy="10.5" r="1.5" fill="#5a9af0"/></svg>
<svg style="left:507.0px;top:72.0px" width="20" height="20" viewBox="0 0 20 20"><text x="0" y="6" font-size="5.5" fill="#f0a020" font-family="Liberation Sans">AL</text><path d="M11 6l4-4 4 4z" fill="#e02020"/><rect x="12" y="6" width="6" height="5" fill="#f4f4f4" stroke="#f0a020" stroke-width="0.8"/><circle cx="3" cy="17" r="2.2" fill="#f4f4f4" stroke="#b81c1c" stroke-width="1.3"/><circle cx="17" cy="17" r="2.2" fill="#f4f4f4" stroke="#b81c1c" stroke-width="1.3"/><path d="M5.2 17h9.6" stroke="#b81c1c" stroke-width="1.1"/><path d="M5 14a5 5 0 0 1 4-5" stroke="#4a8ae0" stroke-width="1" fill="none" stroke-dasharray="1 1"/><circle cx="10" cy="9" r="1.8" fill="#f0c040"/></svg>
<svg style="left:563.5px;top:72.0px" width="20" height="20" viewBox="0 0 20 20"><text x="1.5" y="5.5" font-size="5" fill="#f0a020" font-family="Liberation Sans">RTV</text><path d="M3 16L5 8h10l2 8z" fill="none" stroke="#4a8ae0" stroke-width="1.2"/><circle cx="10" cy="12" r="3" fill="none" stroke="#4a8ae0"/><path d="M10 9v6M7 12h6" stroke="#4a8ae0" stroke-width="0.8"/><circle cx="3" cy="17" r="2.2" fill="#f4f4f4" stroke="#b81c1c" stroke-width="1.3"/><circle cx="17" cy="17" r="2.2" fill="#f4f4f4" stroke="#b81c1c" stroke-width="1.3"/><path d="M15 5l4-3" stroke="#f0f0f0" stroke-width="1.6"/><path d="M17.5 3l1.5-1" stroke="#4a8ae0" stroke-width="1.6"/></svg>
<svg style="left:610.0px;top:72.0px" width="20" height="20" viewBox="0 0 20 20"><path d="M10 4L3 16M10 4l7 12M10 4v12" stroke="#a8a8a8" stroke-width="1"/><path d="M8 2.5a4 4 0 0 1 6 0" stroke="#b81c1c" fill="none"/><path d="M11 1l7 7M18 1l-7 7" stroke="#e02020" stroke-width="1.6"/><circle cx="4" cy="16.5" r="2.2" fill="#f4f4f4" stroke="#b81c1c" stroke-width="1.3"/><circle cx="16" cy="16.5" r="2.2" fill="#f4f4f4" stroke="#b81c1c" stroke-width="1.3"/><path d="M6.2 16.5h7.6" stroke="#b81c1c" stroke-width="1.1"/></svg>
<div class="r" style="left:651px;top:72.5px;width:19px;height:19px;background:#1e6ad0;"></div>
<svg style="left:651.0px;top:72.5px" width="19" height="19" viewBox="0 0 19 19"><text x="1.5" y="8" font-size="7.5" fill="#fff" font-family="Liberation Sans">KAN</text><text x="1.5" y="16.5" font-size="7.5" fill="#fff" font-family="Liberation Sans">BX</text><rect x="14.5" y="14.5" width="3.5" height="3.5" fill="#d09030"/></svg>
<svg style="left:1011.5px;top:72.0px" width="20" height="20" viewBox="0 0 20 20"><circle cx="2.5" cy="2.5" r="2" fill="#f4f4f4" stroke="#b81c1c" stroke-width="1.3"/><circle cx="2.5" cy="16" r="2" fill="#f4f4f4" stroke="#b81c1c" stroke-width="1.3"/><path d="M2.5 4.5v9.5" stroke="#b81c1c" stroke-width="1.2"/><path d="M5 4h3M5 9h3" stroke="#30b050" stroke-width="1"/><path d="M7 5l2 1" stroke="#5080e0"/><path d="M12 1h4l2 2v6h-6z" fill="#f4f4f4"/><text x="12" y="17.5" font-size="7" fill="#f0a020" font-family="Liberation Serif" font-weight="bold">B</text><circle cx="11" cy="11" r="1.2" fill="#f0a020"/></svg>
<svg style="left:66.0px;top:72.9px" width="11" height="11" viewBox="0 0 11 11"><text x="0" y="4" font-size="4" fill="#f0a020" font-family="Liberation Sans">ST</text><rect x="6" y="0.5" width="4" height="4" fill="#e8e8e8"/><circle cx="3" cy="7.5" r="1.8" fill="#f4f4f4" stroke="#b81c1c" stroke-width="1.3"/><path d="M5 7.5h5" stroke="#b81c1c"/><path d="M8 10h2" stroke="#f0a020"/></svg>
<svg style="left:66.0px;top:85.8px" width="11" height="11" viewBox="0 0 11 11"><circle cx="4" cy="4" r="3" fill="#f0e060"/><rect x="3" y="7" width="2" height="2" fill="#5080e0"/><path d="M1 10h7" stroke="#f0a020" stroke-width="1"/><circle cx="8" cy="5" r="1.6" fill="#f4f4f4" stroke="#b81c1c" stroke-width="1.3"/><path d="M9 6l2 3" stroke="#b81c1c"/></svg>
<svg style="left:66.0px;top:98.7px" width="11" height="11" viewBox="0 0 11 11"><rect x="5" y="0.5" width="5" height="4" fill="#e04040"/><path d="M6.5 2.5h2" stroke="#fff"/><circle cx="2.5" cy="8.5" r="1.7" fill="#f4f4f4" stroke="#b81c1c" stroke-width="1.3"/><path d="M4 7.5l3-3M4.5 8.5h5" stroke="#b81c1c"/></svg>
<svg style="left:140.0px;top:72.9px" width="11" height="11" viewBox="0 0 11 11"><rect x="0.5" y="0.5" width="5" height="4" fill="#ddd"/><path d="M8.5 0v4" stroke="#e03030" stroke-width="1.2"/><circle cx="2" cy="8.5" r="1.5" fill="#f4f4f4" stroke="#b81c1c" stroke-width="1.3"/><circle cx="8.5" cy="8.5" r="1.5" fill="#f4f4f4" stroke="#b81c1c" stroke-width="1.3"/><path d="M3.5 8.5h3.5" stroke="#b81c1c"/></svg>
<svg style="left:140.0px;top:85.8px" width="11" height="11" viewBox="0 0 11 11"><text x="0" y="4" font-size="4" fill="#f0a020" font-family="Liberation Sans">IMI</text><path d="M9 0v4" stroke="#e03030" stroke-width="1.2"/><path d="M5 4v3" stroke="#f0a020" stroke-width="1.2"/><circle cx="2" cy="8.5" r="1.5" fill="#f4f4f4" stroke="#b81c1c" stroke-width="1.3"/><circle cx="8.5" cy="8.5" r="1.5" fill="#f4f4f4" stroke="#b81c1c" stroke-width="1.3"/><path d="M3.5 8.5h3.5" stroke="#b81c1c"/></svg>
<svg style="left:140.0px;top:98.7px" width="11" height="11" viewBox="0 0 11 11"><circle cx="5" cy="3.5" r="2.6" fill="none" stroke="#4a8ae0" stroke-width="1.2"/><path d="M3 5.5l-2 2" stroke="#4a8ae0" stroke-width="1.2"/><circle cx="2" cy="8.5" r="1.5" fill="#f4f4f4" stroke="#b81c1c" stroke-width="1.3"/><circle cx="8.5" cy="8.5" r="1.5" fill="#f4f4f4" stroke="#b81c1c" stroke-width="1.3"/><path d="M3.5 8.5h3.5" stroke="#b81c1c"/></svg>
<div class="r" style="left:261px;top:73px;width:9.5px;height:9.5px;background:#1e6ad0;"></div>
<svg style="left:261.0px;top:73.0px" width="9.5" height="9.5" viewBox="0 0 9.5 9.5"><text x="0.5" y="4" font-size="3.8" fill="#fff" font-family="Liberation Sans">KAN</text><text x="0.5" y="8.5" font-size="4" fill="#fff" font-family="Liberation Sans">PEI</text></svg>
<div class="r" style="left:261px;top:86px;width:9.5px;height:9.5px;background:#1e6ad0;"></div>
<svg style="left:261.0px;top:86.0px" width="9.5" height="9.5" viewBox="0 0 9.5 9.5"><text x="0.5" y="4" font-size="3.8" fill="#fff" font-family="Liberation Sans">ISYB</text><text x="0.5" y="8.5" font-size="4" fill="#fff" font-family="Liberation Sans">OUP</text></svg>
<div class="r" style="left:261px;top:99px;width:9.5px;height:9.5px;background:#1e6ad0;"></div>
<svg style="left:261.0px;top:99.0px" width="9.5" height="9.5" viewBox="0 0 9.5 9.5"><text x="0.5" y="4" font-size="3.8" fill="#fff" font-family="Liberation Sans">KAN</text><text x="3.5" y="8.5" font-size="4" fill="#fff" font-family="Liberation Sans">1</text></svg>
<svg style="left:684.5px;top:72.9px" width="11" height="11" viewBox="0 0 11 11"><path d="M2 1h4l2 2" stroke="#f0a020" stroke-width="1.8" fill="none"/><circle cx="3.5" cy="6.5" r="2" fill="#50c050"/><path d="M1.5 9h5" stroke="#5080f0" stroke-width="1.6"/><path d="M1.5 5.5h5" stroke="#f0d030" stroke-width="1"/><text x="7" y="6" font-size="4" fill="#f0a020" font-family="Liberation Sans">%</text></svg>
<svg style="left:684.5px;top:85.8px" width="11" height="11" viewBox="0 0 11 11"><text x="0" y="3.5" font-size="3.5" fill="#f0a020" font-family="Liberation Sans">ET</text><circle cx="3" cy="7.5" r="1.7" fill="#f4f4f4" stroke="#b81c1c" stroke-width="1.3"/><path d="M5 6l5-5" stroke="#f04040" stroke-width="1.8"/><rect x="7" y="7" width="3" height="3" fill="#ddd"/></svg>
<svg style="left:684.5px;top:98.7px" width="11" height="11" viewBox="0 0 11 11"><path d="M2 1h4l2 2" stroke="#f0a020" stroke-width="1.8" fill="none"/><circle cx="4" cy="6" r="2.5" fill="#f0a020"/></svg>
<svg style="left:859.5px;top:72.9px" width="11" height="11" viewBox="0 0 11 11"><path d="M0.5 0.5v9h9" stroke="#b81c1c" stroke-dasharray="1 1" fill="none"/><path d="M2 7l6-6" stroke="#4a8ae0" stroke-width="1.5"/><path d="M2 4h4M2 6h3" stroke="#30b050"/><rect x="5" y="7" width="4" height="2" fill="#f0a020"/></svg>
<svg style="left:859.5px;top:85.8px" width="11" height="11" viewBox="0 0 11 11"><rect x="0.5" y="2" width="3" height="8" fill="#ddd"/><rect x="4" y="4" width="3" height="6" fill="#e05050"/><rect x="7.5" y="1" width="2.5" height="9" fill="#ddd"/><path d="M5 3l4-3" stroke="#4a8ae0" stroke-width="1.2"/></svg>
<svg style="left:859.5px;top:98.7px" width="11" height="11" viewBox="0 0 11 11"><path d="M0.5 0.5v9h9" stroke="#b81c1c" stroke-dasharray="1 1" fill="none"/><path d="M4 1l6 6M10 1L4 7" stroke="#e02020" stroke-width="1.4"/><path d="M2 8h5" stroke="#ccc"/></svg>
<svg style="left:914.5px;top:72.9px" width="11" height="11" viewBox="0 0 11 11"><path d="M1 2l4 3-4 3M5 2l4 3-4 3" stroke="#e040e0" stroke-width="1.4" fill="none"/><circle cx="5" cy="5" r="1.5" fill="#f0e020"/><path d="M1 5h9" stroke="#40c040"/></svg>
<svg style="left:914.5px;top:85.8px" width="11" height="11" viewBox="0 0 11 11"><path d="M0.5 0.5v9" stroke="#b81c1c" stroke-dasharray="1 1"/><path d="M5.5 1l3.5 4-3.5 4-3.5-4z" stroke="#4a8ae0" fill="none" stroke-width="1.1"/><circle cx="5.5" cy="5" r="1.3" fill="#f0a020"/></svg>
<svg style="left:914.5px;top:98.7px" width="11" height="11" viewBox="0 0 11 11"><path d="M0.5 0.5v9" stroke="#b81c1c" stroke-dasharray="1 1"/><rect x="2" y="6" width="3" height="3" fill="#f0a020"/><path d="M4 6l4-4" stroke="#4a8ae0" stroke-width="1.2"/><circle cx="8.5" cy="2" r="1.3" fill="#e02020"/></svg>
<div class="r" style="left:0px;top:138px;width:20px;height:449px;background:#2b2d31;"></div>
<div class="r" style="left:18px;top:138px;width:1px;height:401px;background:#3a3c40;"></div>
<div class="r" style="left:20px;top:138px;width:1048px;height:401px;background:#1b1c20;"></div>
<div class="r" style="left:20px;top:138px;width:1048px;height:1px;background:#3e4044;"></div>
<div class="r" style="left:1067px;top:133px;width:31px;height:454px;background:#1c1d21;"></div>
<div class="r" style="left:1098px;top:138px;width:20px;height:449px;background:#2b2d31;"></div>
<svg style="left:1076.0px;top:127.0px" width="12" height="3" viewBox="0 0 12 3"><path d="M0.5 1.5h1.5M3.5 1.5h1.5M6.5 1.5h1.5M9.5 1.5h1.5" stroke="#bbb" stroke-width="1.2"/></svg>
<svg style="left:1102.0px;top:128.0px" width="12" height="3" viewBox="0 0 12 3"><path d="M0.5 1.5h1.5M3.5 1.5h1.5M6.5 1.5h1.5M9.5 1.5h1.5" stroke="#bbb" stroke-width="1.2"/></svg>
<svg style="left:3.5px;top:139.3px" width="12" height="12" viewBox="0 0 12 12"><path d="M2 10L10 2" stroke="#d8d8d8" stroke-width="1"/><circle cx="2" cy="10" r="1.3" fill="#3f8ff2"/><circle cx="10" cy="2" r="1.3" fill="#3f8ff2"/><path d="M9 11h2v-2z" fill="#bbb"/></svg>
<svg style="left:3.5px;top:155.3px" width="12" height="12" viewBox="0 0 12 12"><path d="M2.5 10V6a3.5 3.5 0 0 1 7 0v4" stroke="#d8d8d8" stroke-width="1" fill="none"/><circle cx="2.5" cy="8.5" r="1.3" fill="#3f8ff2"/><circle cx="9.5" cy="8.5" r="1.3" fill="#3f8ff2"/><path d="M9 11h2v-2z" fill="#bbb"/></svg>
<svg style="left:3.5px;top:170.0px" width="12" height="12" viewBox="0 0 12 12"><rect x="2" y="3" width="7.5" height="6.5" stroke="#d8d8d8" fill="none"/><circle cx="2" cy="3" r="1.2" fill="#3f8ff2"/><circle cx="9.5" cy="9.5" r="1.2" fill="#3f8ff2"/></svg>
<div class="r" style="left:3px;top:186px;width:13px;height:1px;background:#45474b;"></div>
<svg style="left:3.5px;top:190.0px" width="12" height="12" viewBox="0 0 12 12"><path d="M3 4.5A4.2 4.2 0 1 0 9.5 4" stroke="#d8d8d8" stroke-width="1.1" fill="none"/><circle cx="3" cy="4.3" r="1.2" fill="#3f8ff2"/></svg>
<svg style="left:3.5px;top:206.0px" width="12" height="12" viewBox="0 0 12 12"><circle cx="6" cy="6" r="4.3" stroke="#d8d8d8" stroke-width="1.1" fill="none"/><circle cx="6" cy="6" r="1.4" fill="#3f8ff2"/><path d="M6 6h4" stroke="#d8d8d8"/></svg>
<svg style="left:3.5px;top:222.0px" width="12" height="12" viewBox="0 0 12 12"><ellipse cx="6" cy="6" rx="4.5" ry="4" stroke="#d8d8d8" stroke-width="1.1" fill="none"/><path d="M2.5 9.5L9.5 2.5" stroke="#d8d8d8"/><circle cx="9.5" cy="2.5" r="1.2" fill="#3f8ff2"/></svg>
<svg style="left:3.5px;top:238.0px" width="12" height="12" viewBox="0 0 12 12"><path d="M3 9A4.5 4 0 0 1 9 2.5" stroke="#d8d8d8" stroke-width="1.1" fill="none"/><path d="M2.5 9.5L9.5 2.5" stroke="#d8d8d8"/><circle cx="2.5" cy="9.5" r="1.2" fill="#3f8ff2"/></svg>
<svg style="left:3.5px;top:252.7px" width="12" height="12" viewBox="0 0 12 12"><path d="M2.5 10C3 4 8 1 10 6" stroke="#d8d8d8" stroke-width="1.1" fill="none"/><circle cx="2.5" cy="10" r="1.3" fill="#3f8ff2"/><circle cx="10" cy="7" r="1.2" fill="#3f8ff2"/></svg>
<svg style="left:3.5px;top:268.7px" width="12" height="12" viewBox="0 0 12 12"><circle cx="6" cy="6" r="1.2" fill="#3f8ff2"/></svg>
<div class="r" style="left:3px;top:285px;width:13px;height:1px;background:#45474b;"></div>
<svg style="left:3.5px;top:288.5px" width="12" height="12" viewBox="0 0 12 12"><path d="M3 4.5h5.5v5.5H3z" stroke="#d8d8d8" fill="none"/><circle cx="7" cy="5.5" r="3.3" fill="#3f8ff2" stroke="#d8d8d8" stroke-width="0.8"/></svg>
<svg style="left:3.5px;top:305.0px" width="12" height="12" viewBox="0 0 12 12"><path d="M3 4.5h5.5v5.5H3z" stroke="#d8d8d8" fill="none"/><circle cx="7" cy="5.5" r="3.3" fill="#3f8ff2" stroke="#d8d8d8" stroke-width="0.8"/></svg>
<svg style="left:3.5px;top:321.0px" width="12" height="12" viewBox="0 0 12 12"><path d="M3 4.5h5.5v5.5H3z" stroke="#d8d8d8" fill="none"/><circle cx="7" cy="5.5" r="3.3" fill="#3f8ff2" stroke="#d8d8d8" stroke-width="0.8"/></svg>
<svg style="left:3.5px;top:336.5px" width="12" height="12" viewBox="0 0 12 12"><path d="M2 4l4-2 4 2v5l-4 2-4-2z" stroke="#3f8ff2" stroke-width="1.2" fill="none"/><path d="M2 4l4 2 4-2" stroke="#d8d8d8" stroke-width="0.8" fill="none"/></svg>
<svg style="left:3.5px;top:352.4px" width="12" height="12" viewBox="0 0 12 12"><path d="M3 3.5c3-3 8 0 6.5 3.5 2 2-1 4.5-3 3.5-2 2-5.5 0.5-4.5-2-2.5-1-1.5-4 1-5z" stroke="#d8d8d8" stroke-width="1" fill="none"/></svg>
<svg style="left:3.5px;top:368.0px" width="12" height="12" viewBox="0 0 12 12"><path d="M2 2h8v8" stroke="#d8d8d8" stroke-dasharray="1.5 1" fill="none"/><path d="M2 2v8h5" stroke="#d8d8d8" stroke-width="1" fill="none"/><path d="M6 6l4 4" stroke="#d8d8d8"/></svg>
<div class="r" style="left:3px;top:384.5px;width:13px;height:1px;background:#45474b;"></div>
<svg style="left:3.5px;top:388.0px" width="12" height="12" viewBox="0 0 12 12"><path d="M3 4c1-2.5 5-2.5 6 0 2 0.5 2 3.5 0 4-1 2.5-5 2.5-6 0-2-0.5-2-3.5 0-4z" stroke="#d8d8d8" stroke-width="1" fill="none"/></svg>
<svg style="left:3.5px;top:404.0px" width="12" height="12" viewBox="0 0 12 12"><rect x="1.5" y="1.5" width="9" height="9" stroke="#d8d8d8" fill="none"/><path d="M1.5 4.5h9M1.5 7.5h9M4.5 1.5v9M7.5 1.5v9" stroke="#d8d8d8" stroke-width="0.8"/></svg>
<svg style="left:3.5px;top:420.0px" width="12" height="12" viewBox="0 0 12 12"><path d="M1.5 11L6 1l4.5 10M3.3 7.5h5.4" stroke="#d8d8d8" stroke-width="1.1" fill="none"/></svg>
<svg style="left:3.5px;top:435.5px" width="12" height="12" viewBox="0 0 12 12"><path d="M2 9L5.5 1l3.5 8M3.2 6.3h4.6" stroke="#d8d8d8" stroke-width="1" fill="none"/><path d="M1 11h10" stroke="#d8d8d8" stroke-width="1.3"/></svg>
<div class="r" style="left:20px;top:539px;width:1047px;height:12px;background:#2b2d31;"></div>
<div class="r" style="left:20px;top:539px;width:11px;height:11.5px;background:#1e1f23;border:1px solid #45474b;box-sizing:border-box;"></div>
<div class="r" style="left:32px;top:539px;width:11px;height:11.5px;background:#1e1f23;border:1px solid #45474b;box-sizing:border-box;"></div>
<div class="r" style="left:44px;top:539px;width:11px;height:11.5px;background:#1e1f23;border:1px solid #45474b;box-sizing:border-box;"></div>
<div class="r" style="left:56px;top:539px;width:11px;height:11.5px;background:#1e1f23;border:1px solid #45474b;box-sizing:border-box;"></div>
<svg style="left:22.0px;top:540.0px" width="46" height="10" viewBox="0 0 46 10"><path d="M3 2v6M8 2L5 5l3 3" stroke="#333538" fill="none"/><path d="M20 2l-3 3 3 3" stroke="#333538" fill="none"/><path d="M27 2l3 3-3 3" stroke="#333538" fill="none"/><path d="M39 2l3 3-3 3M44 2v6" stroke="#333538" fill="none"/></svg>
<div class="r" style="left:69px;top:539px;width:11px;height:11.5px;background:#2b2d31;border:1px solid #55575b;box-sizing:border-box;"></div>
<svg style="left:70.0px;top:540.0px" width="9" height="9" viewBox="0 0 9 9"><rect x="1.5" y="1.5" width="6" height="6.5" stroke="#ddd" fill="none" stroke-width="0.9"/><path d="M3 3.8h3M3 5.6h3" stroke="#ddd" stroke-width="0.8"/></svg>
<div class="r" style="left:80px;top:539px;width:27px;height:12px;background:#2e3034;"></div>
<div class="t" style="left:82.5px;top:541.4px;font-size:8.5px;color:#f5f5f5;font-weight:bold;transform:scaleX(0.916);">Model</div>
<div class="r" style="left:107px;top:539px;width:33px;height:12px;background:#1c1d21;"></div>
<div class="t" style="left:110.6px;top:541.4px;font-size:8.5px;color:#e0e0e0;transform:scaleX(0.826);">Layout1</div>
<div class="r" style="left:141px;top:539px;width:9.5px;height:12px;background:#1c1d21;"></div>
<svg style="left:142.0px;top:541.0px" width="8" height="8" viewBox="0 0 8 8"><path d="M4 1.5v5M1.5 4h5" stroke="#ddd" stroke-width="1"/></svg>
<div class="r" style="left:20px;top:551px;width:1047px;height:1px;background:#4e5054;"></div>
<div class="r" style="left:1067px;top:138px;width:1px;height:414px;background:#4a4c50;"></div>
<div class="r" style="left:19px;top:552px;width:1048px;height:35px;background:#35373b;"></div>
<svg style="left:19.0px;top:555.0px" width="8" height="18" viewBox="0 0 8 18"><path d="M1 1l5 5M6 1L1 6" stroke="#ddd" stroke-width="1.1"/><path d="M3.5 9v1M3.5 11.5v1M3.5 14v1M3.5 16.5v1" stroke="#bbb" stroke-width="1.1"/></svg>
<div class="t" style="left:30.0px;top:559.3px;font-size:10px;color:#cccccc;font-family:'Liberation Mono',monospace;transform:scaleX(0.833);">:</div>
<div class="r" style="left:26px;top:572px;width:1041px;height:15px;background:#5b5d62;"></div>
<div class="t" style="left:27.5px;top:574.4px;font-size:10.5px;color:#ececec;font-family:'Liberation Mono',monospace;transform:scaleX(0.822);">: KA_VOREIN</div>
<div class="r" style="left:1056px;top:553px;width:11px;height:19px;background:#f4f4f4;"></div>
<svg style="left:1056.0px;top:553.0px" width="11" height="19" viewBox="0 0 11 19"><path d="M2.5 7l3-3 3 3M2.5 12l3 3 3-3" stroke="#555" stroke-width="0.9" fill="none"/></svg>
<div class="r" style="left:0px;top:587px;width:1118px;height:13px;background:#1c1d21;"></div>
<div class="t" style="left:1.8px;top:590.3px;font-size:8px;color:#d0d0d0;transform:scaleX(0.919);">Bereit</div>
<div class="r" style="left:384px;top:588px;width:1px;height:11px;background:#8a8c90;"></div>
<div class="t" style="left:421.4px;top:590.2px;font-size:8.6px;color:#e8e8e8;transform:scaleX(0.860);">4426402.628078, 5485844.594155, 0.000000</div>
<div class="r" style="left:575px;top:588px;width:1px;height:11px;background:#8a8c90;"></div>
<div class="r" style="left:591px;top:588px;width:1px;height:11px;background:#8a8c90;"></div>
<div class="r" style="left:634px;top:588px;width:1px;height:11px;background:#8a8c90;"></div>
<div class="r" style="left:681px;top:588px;width:1px;height:11px;background:#8a8c90;"></div>
<div class="r" style="left:706.6px;top:588px;width:1px;height:11px;background:#8a8c90;"></div>
<div class="r" style="left:741px;top:588px;width:1px;height:11px;background:#8a8c90;"></div>
<div class="r" style="left:769.6px;top:588px;width:1px;height:11px;background:#8a8c90;"></div>
<div class="r" style="left:797px;top:588px;width:1px;height:11px;background:#8a8c90;"></div>
<div class="r" style="left:824.7px;top:588px;width:1px;height:11px;background:#8a8c90;"></div>
<div class="r" style="left:857px;top:588px;width:1px;height:11px;background:#8a8c90;"></div>
<div class="r" style="left:875px;top:588px;width:1px;height:11px;background:#8a8c90;"></div>
<div class="r" style="left:905.7px;top:588px;width:1px;height:11px;background:#8a8c90;"></div>
<div class="r" style="left:921px;top:588px;width:1px;height:11px;background:#8a8c90;"></div>
<div class="r" style="left:944px;top:588px;width:1px;height:11px;background:#8a8c90;"></div>
<div class="r" style="left:962px;top:588px;width:1px;height:11px;background:#8a8c90;"></div>
<div class="r" style="left:985px;top:588px;width:1px;height:11px;background:#8a8c90;"></div>
<div class="r" style="left:1000px;top:588px;width:1px;height:11px;background:#8a8c90;"></div>
<div class="r" style="left:1018px;top:588px;width:1px;height:11px;background:#8a8c90;"></div>
<div class="r" style="left:1060px;top:588px;width:1px;height:11px;background:#8a8c90;"></div>
<div class="r" style="left:1083px;top:588px;width:1px;height:11px;background:#8a8c90;"></div>
<div class="t" style="left:577.0px;top:590.2px;font-size:8.6px;color:#e8e8e8;transform:scaleX(0.810);">DIN</div>
<div class="t" style="left:593.0px;top:590.2px;font-size:8.6px;color:#e8e8e8;transform:scaleX(0.814);">STANDARD</div>
<div class="t" style="left:636.0px;top:590.2px;font-size:8.6px;color:#e8e8e8;transform:scaleX(0.841);">Konstruieren</div>
<div class="t" style="left:684.3px;top:590.2px;font-size:8.6px;color:#707276;transform:scaleX(0.782);">FANG</div>
<div class="t" style="left:709.5px;top:590.2px;font-size:8.6px;color:#707276;transform:scaleX(0.788);">RASTER</div>
<div class="t" style="left:742.6px;top:590.2px;font-size:8.6px;color:#707276;transform:scaleX(0.777);">ORTHO</div>
<div class="t" style="left:772.0px;top:590.2px;font-size:8.6px;color:#707276;transform:scaleX(0.748);">POLAR</div>
<div class="r" style="left:798px;top:588px;width:25px;height:11px;background:#4a4c52;"></div>
<div class="t" style="left:800.5px;top:590.2px;font-size:8.6px;color:#d8d8d8;transform:scaleX(0.681);">OFANG</div>
<div class="t" style="left:827.0px;top:590.2px;font-size:8.6px;color:#707276;transform:scaleX(0.776);">OTRACK</div>
<div class="t" style="left:859.5px;top:590.2px;font-size:8.6px;color:#707276;transform:scaleX(0.729);">LST</div>
<div class="t" style="left:876.9px;top:590.2px;font-size:8.6px;color:#e8e8e8;transform:scaleX(0.738);">MODELL</div>
<div class="t" style="left:908.0px;top:590.2px;font-size:8.6px;color:#e8e8e8;transform:scaleX(0.920);">1:1</div>
<div class="t" style="left:923.6px;top:590.2px;font-size:8.6px;color:#707276;transform:scaleX(0.769);">DBKS</div>
<div class="r" style="left:944.5px;top:588px;width:16.5px;height:11px;background:#4a4c52;"></div>
<div class="t" style="left:946.0px;top:590.2px;font-size:8.6px;color:#e8e8e8;transform:scaleX(0.771);">DYN</div>
<div class="r" style="left:963px;top:588px;width:21.5px;height:11px;background:#4a4c52;"></div>
<div class="t" style="left:965.0px;top:590.2px;font-size:8.6px;color:#e8e8e8;transform:scaleX(0.724);">QUAD</div>
<div class="t" style="left:987.5px;top:590.2px;font-size:8.6px;color:#707276;transform:scaleX(0.840);">RT</div>
<div class="r" style="left:1000.5px;top:588px;width:16.5px;height:11px;background:#4a4c52;"></div>
<div class="t" style="left:1002.0px;top:590.2px;font-size:8.6px;color:#e8e8e8;transform:scaleX(0.735);">HKA</div>
<div class="t" style="left:1020.0px;top:590.2px;font-size:8.6px;color:#707276;transform:scaleX(0.757);">UISPERREN</div>
<div class="t" style="left:1062.0px;top:590.2px;font-size:8.6px;color:#e8e8e8;transform:scaleX(0.818);">Keine</div>
<svg style="left:1085.0px;top:590.0px" width="8" height="6" viewBox="0 0 8 6"><path d="M1 1.5h6L4 5z" fill="#ddd"/></svg>
<svg style="left:1106.0px;top:590.0px" width="10" height="9" viewBox="0 0 10 9"><path d="M8.5 1v1.5M5.5 4v1.5M8.5 4v1.5M2.5 7v1.5M5.5 7v1.5M8.5 7v1.5" stroke="#bbb" stroke-width="1.3"/></svg>
<svg style="left:1074.0px;top:140.5px" width="16" height="16" viewBox="0 0 16 16"><path d="M8 1.5a5 5 0 0 1 3 9l-1 2.5H6l-1-2.5a5 5 0 0 1 3-9z" stroke="#b8b8b8" stroke-width="1.1" fill="none"/><rect x="6" y="12" width="4" height="2.5" fill="#b8b8b8"/></svg>
<svg style="left:1074.0px;top:172.0px" width="16" height="16" viewBox="0 0 16 16"><path d="M1.5 4h13M1.5 8h13M1.5 12h13" stroke="#b8b8b8" stroke-width="1"/><circle cx="5" cy="4" r="1.8" fill="#1c1d21" stroke="#b8b8b8"/><circle cx="11" cy="8" r="1.8" fill="#1c1d21" stroke="#b8b8b8"/><circle cx="7" cy="12" r="1.8" fill="#1c1d21" stroke="#b8b8b8"/></svg>
<svg style="left:1074.0px;top:204.7px" width="16" height="16" viewBox="0 0 16 16"><path d="M8 2l6.5 3.5L8 9 1.5 5.5z" stroke="#b8b8b8" fill="none" stroke-width="1"/><path d="M1.5 8.5L8 12l6.5-3.5M1.5 11L8 14.5l6.5-3.5" stroke="#b8b8b8" fill="none" stroke-width="1"/></svg>
<svg style="left:1074.0px;top:236.7px" width="16" height="16" viewBox="0 0 16 16"><path d="M10.5 5v6.5a2.5 2.5 0 0 1-5 0V4a1.8 1.8 0 0 1 3.6 0v7" stroke="#b8b8b8" fill="none" stroke-width="1"/></svg>
<svg style="left:1074.0px;top:269.5px" width="16" height="16" viewBox="0 0 16 16"><rect x="2" y="2" width="12" height="12" stroke="#b8b8b8" fill="none"/><path d="M2 14L14 2M5 2v12M8 2v12M11 2v12M2 5h12M2 8h12M2 11h12" stroke="#b8b8b8" stroke-width="0.5"/></svg>
<svg style="left:1074.0px;top:300.7px" width="16" height="16" viewBox="0 0 16 16"><text x="1" y="12" font-size="10" font-style="italic" fill="#b8b8b8" font-family="Liberation Serif">f</text><text x="5.5" y="12" font-size="7.5" font-style="italic" fill="#b8b8b8" font-family="Liberation Serif">(x)</text></svg>
<svg style="left:1074.0px;top:331.3px" width="16" height="16" viewBox="0 0 16 16"><rect x="1.5" y="1.5" width="6" height="3" stroke="#b8b8b8" fill="none"/><path d="M4 4.5v9h3M4 9h3" stroke="#b8b8b8" fill="none"/><rect x="7" y="7.5" width="7" height="3" stroke="#b8b8b8" fill="none"/><rect x="7" y="12" width="7" height="3" stroke="#b8b8b8" fill="none"/></svg>
<svg style="left:1074.0px;top:366.0px" width="16" height="16" viewBox="0 0 16 16"><path d="M4 12.5a3 3 0 0 1 0-6 4.5 4.5 0 0 1 8.5-1 3.5 3.5 0 0 1 0 7z" stroke="#b8b8b8" fill="none" stroke-width="1"/><path d="M8 11V7.5M6.5 9l1.5-1.5L9.5 9" stroke="#b8b8b8" fill="none"/></svg>
<svg style="left:1101.5px;top:137.0px" width="12" height="12" viewBox="0 0 12 12"><path d="M6 1v10M1 6h10" stroke="#3f8ff2" stroke-width="1.1"/><path d="M6 0.5l-2 2h4zM6 11.5l-2-2h4zM0.5 6l2-2v4zM11.5 6l-2-2v4z" fill="#3f8ff2"/></svg>
<svg style="left:1101.5px;top:153.3px" width="12" height="12" viewBox="0 0 12 12"><rect x="1" y="1" width="4" height="4" stroke="#ddd" fill="none"/><path d="M8 1v4M6 3h4" stroke="#ddd"/><path d="M5 7l2-2 3 2v3l-2 1.5-3-1.5z" stroke="#3f8ff2" fill="none" stroke-width="1.1"/></svg>
<svg style="left:1101.5px;top:169.0px" width="12" height="12" viewBox="0 0 12 12"><path d="M8 2.5H5a2 2 0 0 0-2 2v4a2 2 0 0 0 2 2h3" stroke="#3f8ff2" stroke-width="1.3" fill="none"/><path d="M6 4.5v4" stroke="#ddd"/></svg>
<svg style="left:1101.5px;top:185.0px" width="12" height="12" viewBox="0 0 12 12"><path d="M6.5 0.5v4" stroke="#ddd" stroke-width="1.5"/><path d="M3.5 4.5h6l1 4H2.5z" fill="#f0b020"/><path d="M0.5 10.5h11" stroke="#3f8ff2" stroke-width="1.6"/></svg>
<svg style="left:1101.5px;top:200.0px" width="12" height="12" viewBox="0 0 12 12"><path d="M2 10l6-6" stroke="#ddd" stroke-width="1.6"/><path d="M7 2.5l2.5 2.5" stroke="#3f8ff2" stroke-width="2.2"/><path d="M8.5 9.5h3M10 8v3" stroke="#30c030" stroke-width="1"/></svg>
<svg style="left:1101.5px;top:216.0px" width="12" height="12" viewBox="0 0 12 12"><rect x="1" y="3" width="10" height="7" stroke="#3f8ff2" fill="none" stroke-width="1.1"/><rect x="2.5" y="6" width="4" height="3" stroke="#ddd" fill="none"/><path d="M7 6l3-2" stroke="#ddd"/></svg>
<div class="r" style="left:1101px;top:232px;width:13px;height:1px;background:#45474b;"></div>
<div class="r" style="left:1101px;top:268.7px;width:13px;height:1px;background:#45474b;"></div>
<div class="r" style="left:1101px;top:304px;width:13px;height:1px;background:#45474b;"></div>
<div class="r" style="left:1101px;top:339.3px;width:13px;height:1px;background:#45474b;"></div>
<div class="r" style="left:1101px;top:361.2px;width:13px;height:1px;background:#45474b;"></div>
<div class="r" style="left:1101px;top:379.3px;width:13px;height:1px;background:#45474b;"></div>
<div class="r" style="left:1101px;top:481px;width:13px;height:1px;background:#45474b;"></div>
<div class="r" style="left:1101px;top:515.3px;width:13px;height:1px;background:#45474b;"></div>
<div class="r" style="left:1101px;top:552.7px;width:13px;height:1px;background:#45474b;"></div>
<svg style="left:1101.5px;top:236.0px" width="12" height="12" viewBox="0 0 12 12"><rect x="1" y="1" width="4" height="4" stroke="#ddd" fill="none"/><path d="M5 7l2-2 3 2v3l-2 1.5-3-1.5z" stroke="#3f8ff2" fill="none" stroke-width="1.1"/><path d="M2 9l2-2" stroke="#f0a020" stroke-width="1.5"/></svg>
<svg style="left:1101.5px;top:252.0px" width="12" height="12" viewBox="0 0 12 12"><path d="M6 2v8M2 6h8" stroke="#3f8ff2" stroke-width="1.1"/><path d="M6 1l-1.5 1.5h3zM1 6l1.5-1.5v3z" fill="#3f8ff2"/><circle cx="9" cy="9" r="1.6" fill="#f0a020"/></svg>
<svg style="left:1101.5px;top:272.0px" width="12" height="12" viewBox="0 0 12 12"><path d="M9.5 3.5A4.3 4.3 0 1 0 10.5 7" stroke="#3f8ff2" stroke-width="1.2" fill="none"/><circle cx="6" cy="6.5" r="1.4" fill="#ddd"/></svg>
<svg style="left:1101.5px;top:288.0px" width="12" height="12" viewBox="0 0 12 12"><path d="M6 1v10" stroke="#ddd"/><path d="M5 2.5a3.5 3.5 0 0 0 0 7" stroke="#3f8ff2" stroke-width="1.2" fill="none"/><path d="M8.5 4l1.5 2-1.5 2" stroke="#3f8ff2" fill="none"/></svg>
<svg style="left:1101.5px;top:309.3px" width="12" height="12" viewBox="0 0 12 12"><path d="M6 1L2 10h4z" stroke="#ccc" fill="none"/><path d="M6 1l4 9H6z" fill="#3f8ff2"/></svg>
<svg style="left:1101.5px;top:324.8px" width="12" height="12" viewBox="0 0 12 12"><path d="M6 1L2 10h4z" stroke="#ccc" fill="none"/><path d="M6 1l4 9H6z" fill="#3f8ff2"/><path d="M1 2l10 9" stroke="#ddd"/></svg>
<svg style="left:1101.5px;top:342.7px" width="12" height="12" viewBox="0 0 12 12"><rect x="1" y="1" width="4" height="4" stroke="#3f8ff2" fill="none" stroke-width="1.1"/><rect x="7" y="1" width="4" height="4" stroke="#3f8ff2" fill="none" stroke-width="1.1"/><rect x="1" y="7" width="4" height="4" stroke="#3f8ff2" fill="none" stroke-width="1.1"/><rect x="7" y="7" width="4" height="4" stroke="#3f8ff2" fill="none" stroke-width="1.1"/></svg>
<svg style="left:1101.5px;top:364.0px" width="12" height="12" viewBox="0 0 12 12"><rect x="2" y="1" width="3.5" height="8" stroke="#3f8ff2" fill="none" stroke-width="1.1"/><rect x="7" y="5" width="3.5" height="4" stroke="#ddd" fill="none"/><path d="M1 11h10" stroke="#ddd"/></svg>
<svg style="left:1101.5px;top:383.0px" width="12" height="12" viewBox="0 0 12 12"><path d="M1 8h6M1 4h6" stroke="#3f8ff2" stroke-width="1.1"/><path d="M7 2v8" stroke="#ddd"/><path d="M11 1L6 11" stroke="#ddd"/></svg>
<svg style="left:1101.5px;top:400.7px" width="12" height="12" viewBox="0 0 12 12"><path d="M1 6.5h5" stroke="#3f8ff2" stroke-width="1.2"/><path d="M10.5 1L6 11" stroke="#ddd" stroke-width="1.1"/></svg>
<svg style="left:1101.5px;top:416.7px" width="12" height="12" viewBox="0 0 12 12"><path d="M2 3v6h8V3" stroke="#ddd" fill="none" stroke-width="1.1"/><path d="M4 3v2M8 3v2" stroke="#3f8ff2" stroke-width="1.2"/></svg>
<svg style="left:1101.5px;top:432.7px" width="12" height="12" viewBox="0 0 12 12"><path d="M2 3v6h8V3" stroke="#ddd" fill="none" stroke-width="1.1"/><path d="M4 6h4M4 5v2M8 5v2" stroke="#3f8ff2" stroke-width="1.1"/></svg>
<svg style="left:1101.5px;top:448.3px" width="12" height="12" viewBox="0 0 12 12"><path d="M1 6h8" stroke="#ddd"/><circle cx="9.5" cy="6" r="1.3" fill="#3f8ff2"/></svg>
<svg style="left:1101.5px;top:463.3px" width="12" height="12" viewBox="0 0 12 12"><path d="M2 11V1h5l3 10z" stroke="#ddd" fill="none" stroke-width="1.1"/><path d="M5 1v10" stroke="#ddd"/><path d="M7 1l3 10H5z" fill="#6a6c70"/></svg>
<svg style="left:1101.5px;top:485.0px" width="12" height="12" viewBox="0 0 12 12"><path d="M2 11V5a4 4 0 0 1 4-4h5" stroke="#3f8ff2" stroke-width="1.2" fill="none"/><path d="M4 11V7a3 3 0 0 1 3-3h4" stroke="#aaa" stroke-width="0.8" fill="none"/></svg>
<svg style="left:1101.5px;top:498.3px" width="12" height="12" viewBox="0 0 12 12"><path d="M2 11V6a5 5 0 0 1 5-5h4" stroke="#3f8ff2" stroke-width="1.2" fill="none"/><path d="M4 11V7a3 3 0 0 1 3-3h4" stroke="#aaa" stroke-width="0.8" fill="none"/></svg>
<svg style="left:1101.5px;top:520.0px" width="12" height="12" viewBox="0 0 12 12"><path d="M2 10L10 2" stroke="#ddd" stroke-width="2.4"/><path d="M2 10L10 2" stroke="#3f8ff2" stroke-width="1" stroke-dasharray="2 1.5"/></svg>
<svg style="left:1101.5px;top:535.0px" width="12" height="12" viewBox="0 0 12 12"><path d="M2 10L10 2" stroke="#ddd" stroke-width="1"/><path d="M2.5 7.5l2 2M5 5l2 2M7.5 2.5l2 2" stroke="#3f8ff2" stroke-width="1.3"/></svg>
<svg style="left:1101.5px;top:555.0px" width="12" height="12" viewBox="0 0 12 12"><rect x="1" y="1" width="8" height="8" fill="#6a6c70" stroke="#888"/><path d="M7 11l4-4" stroke="#f0b020" stroke-width="1.6"/></svg>
<svg style="left:1101.5px;top:570.7px" width="12" height="12" viewBox="0 0 12 12"><path d="M9 2.5H6a4 4 0 0 0 0 8" stroke="#3f8ff2" stroke-width="1.4" fill="none"/><path d="M6 11l5-5" stroke="#f0b020" stroke-width="1.6"/></svg>
<svg style="left:0;top:0" width="1118" height="600" viewBox="0 0 1118 600" font-family="Liberation Sans"><defs><clipPath id="dc"><rect x="20" y="139" width="1047" height="400"/></clipPath></defs><g clip-path="url(#dc)"><line x1="263.5" y1="140.0" x2="263.5" y2="164.0" stroke="#2a9a50" stroke-width="1"/><line x1="245.0" y1="145.5" x2="283.0" y2="145.5" stroke="#8a3a3a" stroke-width="1"/><circle cx="185.8" cy="191.3" r="14" fill="#8c8c8c"/><line x1="171.8" y1="191.3" x2="199.8" y2="191.3" stroke="#b4b4b4" stroke-width="0.6"/><line x1="172.5" y1="187.0" x2="199.1" y2="195.6" stroke="#b4b4b4" stroke-width="0.6"/><line x1="174.5" y1="183.1" x2="197.1" y2="199.5" stroke="#b4b4b4" stroke-width="0.6"/><line x1="177.6" y1="180.0" x2="194.0" y2="202.6" stroke="#b4b4b4" stroke-width="0.6"/><line x1="181.5" y1="178.0" x2="190.1" y2="204.6" stroke="#b4b4b4" stroke-width="0.6"/><line x1="185.8" y1="177.3" x2="185.8" y2="205.3" stroke="#b4b4b4" stroke-width="0.6"/><line x1="190.1" y1="178.0" x2="181.5" y2="204.6" stroke="#b4b4b4" stroke-width="0.6"/><line x1="194.0" y1="180.0" x2="177.6" y2="202.6" stroke="#b4b4b4" stroke-width="0.6"/><line x1="197.1" y1="183.1" x2="174.5" y2="199.5" stroke="#b4b4b4" stroke-width="0.6"/><line x1="199.1" y1="187.0" x2="172.5" y2="195.6" stroke="#b4b4b4" stroke-width="0.6"/><circle cx="371.5" cy="480.5" r="14" fill="#8c8c8c"/><line x1="357.5" y1="480.5" x2="385.5" y2="480.5" stroke="#b4b4b4" stroke-width="0.6"/><line x1="358.2" y1="476.2" x2="384.8" y2="484.8" stroke="#b4b4b4" stroke-width="0.6"/><line x1="360.2" y1="472.3" x2="382.8" y2="488.7" stroke="#b4b4b4" stroke-width="0.6"/><line x1="363.3" y1="469.2" x2="379.7" y2="491.8" stroke="#b4b4b4" stroke-width="0.6"/><line x1="367.2" y1="467.2" x2="375.8" y2="493.8" stroke="#b4b4b4" stroke-width="0.6"/><line x1="371.5" y1="466.5" x2="371.5" y2="494.5" stroke="#b4b4b4" stroke-width="0.6"/><line x1="375.8" y1="467.2" x2="367.2" y2="493.8" stroke="#b4b4b4" stroke-width="0.6"/><line x1="379.7" y1="469.2" x2="363.3" y2="491.8" stroke="#b4b4b4" stroke-width="0.6"/><line x1="382.8" y1="472.3" x2="360.2" y2="488.7" stroke="#b4b4b4" stroke-width="0.6"/><line x1="384.8" y1="476.2" x2="358.2" y2="484.8" stroke="#b4b4b4" stroke-width="0.6"/><line x1="82.0" y1="139.2" x2="189.0" y2="177.9" stroke="#17a317" stroke-width="1"/><line x1="20.0" y1="145.7" x2="177.0" y2="202.0" stroke="#17a317" stroke-width="1"/><line x1="92.5" y1="154.0" x2="190.0" y2="189.4" stroke="#b01ec8" stroke-width="1"/><line x1="51.4" y1="138.9" x2="66.7" y2="144.4" stroke="#b01ec8" stroke-width="1"/><line x1="90.0" y1="160.2" x2="188.0" y2="194.0" stroke="#b01ec8" stroke-width="1"/><line x1="32.0" y1="139.2" x2="64.3" y2="151.3" stroke="#b01ec8" stroke-width="1"/><g transform="translate(90.50 174.60) rotate(20.50) scale(0.5222 0.6444)" fill="none" stroke="#1ab8c8" stroke-width="0.9" stroke-linecap="round" stroke-linejoin="round" style="vector-effect:non-scaling-stroke"><path vector-effect="non-scaling-stroke" transform="translate(0.00 0)" d="M0.4 1.2C1 0.4 2 0 3 0 4.6 0 5.6 1 5.6 2.3 5.6 3.6 4.5 4.3 2.8 4.3 4.8 4.3 6 5.2 6 6.6 6 8.1 4.7 9 3 9 1.8 9 0.8 8.6 0 7.8"/><path vector-effect="non-scaling-stroke" transform="translate(8.20 0)" d="M5.6 0H1.1L0.6 4.1C1.3 3.6 2.1 3.4 3 3.4 4.8 3.4 6 4.5 6 6.2 6 7.9 4.7 9 3 9 1.8 9 0.8 8.6 0 7.8"/><path vector-effect="non-scaling-stroke" transform="translate(16.40 0)" d="M0 0H6L2 9"/><path vector-effect="non-scaling-stroke" transform="translate(24.60 0)" d="M1.25 8.4V9"/><path vector-effect="non-scaling-stroke" transform="translate(29.30 0)" d="M3 0C5.2 0 6 2.2 6 4.5S5.2 9 3 9 0 6.8 0 4.5 0.8 0 3 0Z"/><path vector-effect="non-scaling-stroke" transform="translate(37.50 0)" d="M5.4 0.8C4.8 0.3 4 0 3.2 0 1.2 0 0 2 0 5 0 7.6 1.2 9 3 9 4.8 9 6 7.8 6 6.1 6 4.4 4.8 3.3 3.1 3.3 1.6 3.3 0.4 4.2 0 5.6"/><path vector-effect="non-scaling-stroke" transform="translate(45.70 0)" d="M3 0C5.2 0 6 2.2 6 4.5S5.2 9 3 9 0 6.8 0 4.5 0.8 0 3 0Z"/></g><line x1="197.3" y1="186.7" x2="382.7" y2="471.2" stroke="#14b48c" stroke-width="1"/><line x1="179.0" y1="205.0" x2="359.3" y2="485.2" stroke="#14b48c" stroke-width="1"/><line x1="188.0" y1="197.3" x2="232.0" y2="268.0" stroke="#b01ec8" stroke-width="1"/><line x1="192.0" y1="196.0" x2="236.5" y2="265.3" stroke="#b01ec8" stroke-width="1"/><line x1="247.0" y1="291.7" x2="305.5" y2="382.0" stroke="#b01ec8" stroke-width="1"/><line x1="252.0" y1="290.2" x2="312.2" y2="378.8" stroke="#b01ec8" stroke-width="1"/><line x1="321.3" y1="407.3" x2="367.5" y2="474.7" stroke="#b01ec8" stroke-width="1"/><line x1="327.5" y1="403.5" x2="374.2" y2="472.3" stroke="#b01ec8" stroke-width="1"/><g transform="translate(209.80 258.70) rotate(57.00) scale(0.4932 0.6444)" fill="none" stroke="#1ab8c8" stroke-width="0.9" stroke-linecap="round" stroke-linejoin="round" style="vector-effect:non-scaling-stroke"><path vector-effect="non-scaling-stroke" transform="translate(0.00 0)" d="M0.4 1.2C1 0.4 2 0 3 0 4.6 0 5.6 1 5.6 2.3 5.6 3.6 4.5 4.3 2.8 4.3 4.8 4.3 6 5.2 6 6.6 6 8.1 4.7 9 3 9 1.8 9 0.8 8.6 0 7.8"/><path vector-effect="non-scaling-stroke" transform="translate(8.20 0)" d="M5.6 0H1.1L0.6 4.1C1.3 3.6 2.1 3.4 3 3.4 4.8 3.4 6 4.5 6 6.2 6 7.9 4.7 9 3 9 1.8 9 0.8 8.6 0 7.8"/><path vector-effect="non-scaling-stroke" transform="translate(16.40 0)" d="M0 0H6L2 9"/><path vector-effect="non-scaling-stroke" transform="translate(24.60 0)" d="M1.25 8.4V9"/><path vector-effect="non-scaling-stroke" transform="translate(29.30 0)" d="M3 0C5.2 0 6 2.2 6 4.5S5.2 9 3 9 0 6.8 0 4.5 0.8 0 3 0Z"/><path vector-effect="non-scaling-stroke" transform="translate(37.50 0)" d="M5.4 0.8C4.8 0.3 4 0 3.2 0 1.2 0 0 2 0 5 0 7.6 1.2 9 3 9 4.8 9 6 7.8 6 6.1 6 4.4 4.8 3.3 3.1 3.3 1.6 3.3 0.4 4.2 0 5.6"/><path vector-effect="non-scaling-stroke" transform="translate(45.70 0)" d="M3 0C5.2 0 6 2.2 6 4.5S5.2 9 3 9 0 6.8 0 4.5 0.8 0 3 0Z"/></g><g transform="translate(306.80 409.30) rotate(57.00) scale(0.4932 0.6444)" fill="none" stroke="#1ab8c8" stroke-width="0.9" stroke-linecap="round" stroke-linejoin="round" style="vector-effect:non-scaling-stroke"><path vector-effect="non-scaling-stroke" transform="translate(0.00 0)" d="M0.4 1.2C1 0.4 2 0 3 0 4.6 0 5.6 1 5.6 2.3 5.6 3.6 4.5 4.3 2.8 4.3 4.8 4.3 6 5.2 6 6.6 6 8.1 4.7 9 3 9 1.8 9 0.8 8.6 0 7.8"/><path vector-effect="non-scaling-stroke" transform="translate(8.20 0)" d="M5.6 0H1.1L0.6 4.1C1.3 3.6 2.1 3.4 3 3.4 4.8 3.4 6 4.5 6 6.2 6 7.9 4.7 9 3 9 1.8 9 0.8 8.6 0 7.8"/><path vector-effect="non-scaling-stroke" transform="translate(16.40 0)" d="M0 0H6L2 9"/><path vector-effect="non-scaling-stroke" transform="translate(24.60 0)" d="M1.25 8.4V9"/><path vector-effect="non-scaling-stroke" transform="translate(29.30 0)" d="M0.3 2.2C0.6 0.6 1.8 0 3 0 4.6 0 5.7 1 5.7 2.5 5.7 4 4.6 5 3 6.2L0 9H6"/><path vector-effect="non-scaling-stroke" transform="translate(37.50 0)" d="M5.6 0H1.1L0.6 4.1C1.3 3.6 2.1 3.4 3 3.4 4.8 3.4 6 4.5 6 6.2 6 7.9 4.7 9 3 9 1.8 9 0.8 8.6 0 7.8"/><path vector-effect="non-scaling-stroke" transform="translate(45.70 0)" d="M3 0C5.2 0 6 2.2 6 4.5S5.2 9 3 9 0 6.8 0 4.5 0.8 0 3 0Z"/></g><g transform="translate(249.00 243.90) rotate(57.00) scale(0.9864 1.2222)" fill="none" stroke="#d0d0d0" stroke-width="1.0" stroke-linecap="round" stroke-linejoin="round" style="vector-effect:non-scaling-stroke"><path vector-effect="non-scaling-stroke" transform="translate(0.00 0)" d="M0 0V9H2.3C4.8 9 6 7 6 4.5S4.8 0 2.3 0Z"/><path vector-effect="non-scaling-stroke" transform="translate(8.20 0)" d="M0 9V0L6 9V0"/><path vector-effect="non-scaling-stroke" transform="translate(24.60 0)" d="M0.3 2.2C0.6 0.6 1.8 0 3 0 4.6 0 5.7 1 5.7 2.5 5.7 4 4.6 5 3 6.2L0 9H6"/><path vector-effect="non-scaling-stroke" transform="translate(32.80 0)" d="M3 0C5.2 0 6 2.2 6 4.5S5.2 9 3 9 0 6.8 0 4.5 0.8 0 3 0Z"/><path vector-effect="non-scaling-stroke" transform="translate(41.00 0)" d="M3 0C5.2 0 6 2.2 6 4.5S5.2 9 3 9 0 6.8 0 4.5 0.8 0 3 0Z"/><path vector-effect="non-scaling-stroke" transform="translate(57.40 0)" d="M0 4.3H3.2C4.8 4.3 5.6 3.5 5.6 2.2S4.8 0 3.2 0H0V9H3.4C5 9 6 8 6 6.6S5 4.3 3.4 4.3"/><path vector-effect="non-scaling-stroke" transform="translate(73.80 0)" d="M0 4.6H6"/><path vector-effect="non-scaling-stroke" transform="translate(90.20 0)" d="M1.2 1.8L3.2 0V9M1 9H5.4"/><path vector-effect="non-scaling-stroke" transform="translate(98.40 0)" d="M0.3 2.2C0.6 0.6 1.8 0 3 0 4.6 0 5.7 1 5.7 2.5 5.7 4 4.6 5 3 6.2L0 9H6"/><path vector-effect="non-scaling-stroke" transform="translate(106.60 0)" d="M1.25 8.4V9"/><path vector-effect="non-scaling-stroke" transform="translate(111.30 0)" d="M5.4 0.8C4.8 0.3 4 0 3.2 0 1.2 0 0 2 0 5 0 7.6 1.2 9 3 9 4.8 9 6 7.8 6 6.1 6 4.4 4.8 3.3 3.1 3.3 1.6 3.3 0.4 4.2 0 5.6"/><path vector-effect="non-scaling-stroke" transform="translate(119.50 0)" d="M1.2 1.8L3.2 0V9M1 9H5.4"/><path vector-effect="non-scaling-stroke" transform="translate(135.90 0)" d="M0 4.6H6"/><path vector-effect="non-scaling-stroke" transform="translate(152.30 0)" d="M1.2 1.8L3.2 0V9M1 9H5.4"/><path vector-effect="non-scaling-stroke" transform="translate(160.50 0)" d="M5.6 0H1.1L0.6 4.1C1.3 3.6 2.1 3.4 3 3.4 4.8 3.4 6 4.5 6 6.2 6 7.9 4.7 9 3 9 1.8 9 0.8 8.6 0 7.8"/><path vector-effect="non-scaling-stroke" transform="translate(168.70 0)" d="M1.25 8.4V9"/><path vector-effect="non-scaling-stroke" transform="translate(173.40 0)" d="M1.2 1.8L3.2 0V9M1 9H5.4"/><path vector-effect="non-scaling-stroke" transform="translate(181.60 0)" d="M1.3 0.2C2.1 0.2 2.6 0.8 2.6 1.8S2.1 3.4 1.3 3.4 0 2.8 0 1.8 0.5 0.2 1.3 0.2ZM5 0L0.5 9M4.2 5.6C5 5.6 5.5 6.2 5.5 7.2S5 8.8 4.2 8.8 2.9 8.2 2.9 7.2 3.4 5.6 4.2 5.6ZM7.7 5.6C8.5 5.6 9 6.2 9 7.2S8.5 8.8 7.7 8.8 6.4 8.2 6.4 7.2 6.9 5.6 7.7 5.6Z"/></g><g transform="translate(244.7 316.1) rotate(57)"><rect x="-10" y="-8" width="20" height="16" fill="none" stroke="#b01818" stroke-width="1"/><g transform="translate(-6.00 -5.00) scale(0.8451 1.1111)" fill="none" stroke="#b01818" stroke-width="0.9" stroke-linecap="round" stroke-linejoin="round" style="vector-effect:non-scaling-stroke"><path vector-effect="non-scaling-stroke" transform="translate(0.00 0)" d="M1.2 1.8L3.2 0V9M1 9H5.4"/><path vector-effect="non-scaling-stroke" transform="translate(8.20 0)" d="M5.6 0H1.1L0.6 4.1C1.3 3.6 2.1 3.4 3 3.4 4.8 3.4 6 4.5 6 6.2 6 7.9 4.7 9 3 9 1.8 9 0.8 8.6 0 7.8"/></g></g><line x1="263.0" y1="348.0" x2="284.9" y2="378.8" stroke="#c8c8c8" stroke-width="1"/><path d="M254.8 332.9 L268 348 L258.5 351.5 Z" fill="#c8c8c8"/><line x1="357.0" y1="472.3" x2="263.5" y2="539.0" stroke="#17a317" stroke-width="1"/><line x1="378.0" y1="493.3" x2="311.5" y2="538.9" stroke="#17a317" stroke-width="1"/><line x1="296.3" y1="529.5" x2="368.7" y2="479.3" stroke="#b01ec8" stroke-width="1"/><line x1="298.7" y1="533.5" x2="371.0" y2="484.0" stroke="#b01ec8" stroke-width="1"/><line x1="316.2" y1="539.5" x2="480.0" y2="425.0" stroke="#f2f2f2" stroke-width="2"/><line x1="176.0" y1="178.0" x2="197.0" y2="207.0" stroke="#14b48c" stroke-width="1"/><line x1="175.0" y1="199.0" x2="197.0" y2="186.7" stroke="#14b48c" stroke-width="1"/><line x1="360.0" y1="470.0" x2="383.0" y2="491.0" stroke="#14b48c" stroke-width="1"/><line x1="362.0" y1="490.0" x2="382.0" y2="471.0" stroke="#17a317" stroke-width="1"/><g transform="translate(172.90 155.60) scale(1.7746 1.8889)" fill="none" stroke="#c8c020" stroke-width="1.1" stroke-linecap="round" stroke-linejoin="round" style="vector-effect:non-scaling-stroke"><path vector-effect="non-scaling-stroke" transform="translate(0.00 0)" d="M1.2 1.8L3.2 0V9M1 9H5.4"/><path vector-effect="non-scaling-stroke" transform="translate(8.20 0)" d="M4.6 9V0L0 6.4H6"/></g><g transform="translate(206.40 178.20) scale(1.2727 1.3222)" fill="none" stroke="#b41414" stroke-width="1.0" stroke-linecap="round" stroke-linejoin="round" style="vector-effect:non-scaling-stroke"><path vector-effect="non-scaling-stroke" transform="translate(0.00 0)" d="M0.4 1.2C1 0.4 2 0 3 0 4.6 0 5.6 1 5.6 2.3 5.6 3.6 4.5 4.3 2.8 4.3 4.8 4.3 6 5.2 6 6.6 6 8.1 4.7 9 3 9 1.8 9 0.8 8.6 0 7.8"/><path vector-effect="non-scaling-stroke" transform="translate(8.20 0)" d="M5.4 0.8C4.8 0.3 4 0 3.2 0 1.2 0 0 2 0 5 0 7.6 1.2 9 3 9 4.8 9 6 7.8 6 6.1 6 4.4 4.8 3.3 3.1 3.3 1.6 3.3 0.4 4.2 0 5.6"/><path vector-effect="non-scaling-stroke" transform="translate(16.40 0)" d="M3 0C5.2 0 6 2.2 6 4.5S5.2 9 3 9 0 6.8 0 4.5 0.8 0 3 0Z"/><path vector-effect="non-scaling-stroke" transform="translate(24.60 0)" d="M1.25 8.4V9"/><path vector-effect="non-scaling-stroke" transform="translate(29.30 0)" d="M1.2 1.8L3.2 0V9M1 9H5.4"/><path vector-effect="non-scaling-stroke" transform="translate(37.50 0)" d="M1.2 1.8L3.2 0V9M1 9H5.4"/><path vector-effect="non-scaling-stroke" transform="translate(45.70 0)" d="M3 0C5.2 0 6 2.2 6 4.5S5.2 9 3 9 0 6.8 0 4.5 0.8 0 3 0Z"/></g><g transform="translate(206.40 192.60) scale(1.2727 1.3222)" fill="none" stroke="#17a317" stroke-width="1.0" stroke-linecap="round" stroke-linejoin="round" style="vector-effect:non-scaling-stroke"><path vector-effect="non-scaling-stroke" transform="translate(0.00 0)" d="M0.4 1.2C1 0.4 2 0 3 0 4.6 0 5.6 1 5.6 2.3 5.6 3.6 4.5 4.3 2.8 4.3 4.8 4.3 6 5.2 6 6.6 6 8.1 4.7 9 3 9 1.8 9 0.8 8.6 0 7.8"/><path vector-effect="non-scaling-stroke" transform="translate(8.20 0)" d="M5.4 0.8C4.8 0.3 4 0 3.2 0 1.2 0 0 2 0 5 0 7.6 1.2 9 3 9 4.8 9 6 7.8 6 6.1 6 4.4 4.8 3.3 3.1 3.3 1.6 3.3 0.4 4.2 0 5.6"/><path vector-effect="non-scaling-stroke" transform="translate(16.40 0)" d="M3 0C5.2 0 6 2.2 6 4.5S5.2 9 3 9 0 6.8 0 4.5 0.8 0 3 0Z"/><path vector-effect="non-scaling-stroke" transform="translate(24.60 0)" d="M1.25 8.4V9"/><path vector-effect="non-scaling-stroke" transform="translate(29.30 0)" d="M1.2 1.8L3.2 0V9M1 9H5.4"/><path vector-effect="non-scaling-stroke" transform="translate(37.50 0)" d="M1.2 1.8L3.2 0V9M1 9H5.4"/><path vector-effect="non-scaling-stroke" transform="translate(45.70 0)" d="M3 0C5.2 0 6 2.2 6 4.5S5.2 9 3 9 0 6.8 0 4.5 0.8 0 3 0Z"/></g><g transform="translate(359.50 444.50) scale(1.7183 1.8889)" fill="none" stroke="#c8c020" stroke-width="1.1" stroke-linecap="round" stroke-linejoin="round" style="vector-effect:non-scaling-stroke"><path vector-effect="non-scaling-stroke" transform="translate(0.00 0)" d="M1.2 1.8L3.2 0V9M1 9H5.4"/><path vector-effect="non-scaling-stroke" transform="translate(8.20 0)" d="M5.6 0H1.1L0.6 4.1C1.3 3.6 2.1 3.4 3 3.4 4.8 3.4 6 4.5 6 6.2 6 7.9 4.7 9 3 9 1.8 9 0.8 8.6 0 7.8"/></g><g transform="translate(393.40 467.50) scale(1.2573 1.2889)" fill="none" stroke="#b41414" stroke-width="1.0" stroke-linecap="round" stroke-linejoin="round" style="vector-effect:non-scaling-stroke"><path vector-effect="non-scaling-stroke" transform="translate(0.00 0)" d="M0.4 1.2C1 0.4 2 0 3 0 4.6 0 5.6 1 5.6 2.3 5.6 3.6 4.5 4.3 2.8 4.3 4.8 4.3 6 5.2 6 6.6 6 8.1 4.7 9 3 9 1.8 9 0.8 8.6 0 7.8"/><path vector-effect="non-scaling-stroke" transform="translate(8.20 0)" d="M5.4 0.8C4.8 0.3 4 0 3.2 0 1.2 0 0 2 0 5 0 7.6 1.2 9 3 9 4.8 9 6 7.8 6 6.1 6 4.4 4.8 3.3 3.1 3.3 1.6 3.3 0.4 4.2 0 5.6"/><path vector-effect="non-scaling-stroke" transform="translate(16.40 0)" d="M3 0C5.2 0 6 2.2 6 4.5S5.2 9 3 9 0 6.8 0 4.5 0.8 0 3 0Z"/><path vector-effect="non-scaling-stroke" transform="translate(24.60 0)" d="M1.25 8.4V9"/><path vector-effect="non-scaling-stroke" transform="translate(29.30 0)" d="M0 0H6L2 9"/><path vector-effect="non-scaling-stroke" transform="translate(37.50 0)" d="M5.6 0H1.1L0.6 4.1C1.3 3.6 2.1 3.4 3 3.4 4.8 3.4 6 4.5 6 6.2 6 7.9 4.7 9 3 9 1.8 9 0.8 8.6 0 7.8"/><path vector-effect="non-scaling-stroke" transform="translate(45.70 0)" d="M3 0C5.2 0 6 2.2 6 4.5S5.2 9 3 9 0 6.8 0 4.5 0.8 0 3 0Z"/></g><g transform="translate(393.40 482.30) scale(1.2573 1.2889)" fill="none" stroke="#17a317" stroke-width="1.0" stroke-linecap="round" stroke-linejoin="round" style="vector-effect:non-scaling-stroke"><path vector-effect="non-scaling-stroke" transform="translate(0.00 0)" d="M0.4 1.2C1 0.4 2 0 3 0 4.6 0 5.6 1 5.6 2.3 5.6 3.6 4.5 4.3 2.8 4.3 4.8 4.3 6 5.2 6 6.6 6 8.1 4.7 9 3 9 1.8 9 0.8 8.6 0 7.8"/><path vector-effect="non-scaling-stroke" transform="translate(8.20 0)" d="M5.4 0.8C4.8 0.3 4 0 3.2 0 1.2 0 0 2 0 5 0 7.6 1.2 9 3 9 4.8 9 6 7.8 6 6.1 6 4.4 4.8 3.3 3.1 3.3 1.6 3.3 0.4 4.2 0 5.6"/><path vector-effect="non-scaling-stroke" transform="translate(16.40 0)" d="M3 0C5.2 0 6 2.2 6 4.5S5.2 9 3 9 0 6.8 0 4.5 0.8 0 3 0Z"/><path vector-effect="non-scaling-stroke" transform="translate(24.60 0)" d="M1.25 8.4V9"/><path vector-effect="non-scaling-stroke" transform="translate(29.30 0)" d="M0 0H6L2 9"/><path vector-effect="non-scaling-stroke" transform="translate(37.50 0)" d="M5.6 0H1.1L0.6 4.1C1.3 3.6 2.1 3.4 3 3.4 4.8 3.4 6 4.5 6 6.2 6 7.9 4.7 9 3 9 1.8 9 0.8 8.6 0 7.8"/><path vector-effect="non-scaling-stroke" transform="translate(45.70 0)" d="M3 0C5.2 0 6 2.2 6 4.5S5.2 9 3 9 0 6.8 0 4.5 0.8 0 3 0Z"/></g><line x1="954.8" y1="138.0" x2="895.0" y2="206.5" stroke="#8a3434" stroke-width="1"/><line x1="895.0" y1="206.5" x2="1067.6" y2="359.0" stroke="#8a3434" stroke-width="1"/><line x1="814.0" y1="492.0" x2="743.0" y2="539.0" stroke="#8a3434" stroke-width="1"/><line x1="835.0" y1="492.0" x2="877.0" y2="539.0" stroke="#8a3434" stroke-width="1"/><line x1="71.3" y1="455.0" x2="71.3" y2="487.0" stroke="#1fa050" stroke-width="2"/><path d="M68.6 456.5 L71.3 449.5 L74 456.5 Z" fill="#1fa050"/><path d="M68.2 441l3.1 3.5 3.1-3.5M71.3 444.5v3.5" stroke="#1fa050" stroke-width="0.9" fill="none"/><line x1="72.0" y1="487.2" x2="103.0" y2="487.2" stroke="#d06a6a" stroke-width="1.8"/><path d="M102 484.5 L109.2 487.2 L102 489.9 Z" fill="#d06a6a"/><path d="M111 483.8l6.2 7.2M117.2 483.8l-6.2 7.2" stroke="#d06a6a" stroke-width="1"/><circle cx="71.3" cy="487.2" r="2.4" fill="#1a4fa0"/><circle cx="1038.4" cy="167.9" r="22.8" fill="#8e8e8e"/><path transform="translate(1038.4 149.9) rotate(180.0)" d="M0 -1.6L1.5 1.2H-1.5Z" fill="#5c5c5c"/><path transform="translate(1051.1 155.2) rotate(225.0)" d="M0 -1.6L1.5 1.2H-1.5Z" fill="#5c5c5c"/><path transform="translate(1056.4 167.9) rotate(270.0)" d="M0 -1.6L1.5 1.2H-1.5Z" fill="#5c5c5c"/><path transform="translate(1051.1 180.6) rotate(315.0)" d="M0 -1.6L1.5 1.2H-1.5Z" fill="#5c5c5c"/><path transform="translate(1038.4 185.9) rotate(360.0)" d="M0 -1.6L1.5 1.2H-1.5Z" fill="#5c5c5c"/><path transform="translate(1025.7 180.6) rotate(405.0)" d="M0 -1.6L1.5 1.2H-1.5Z" fill="#5c5c5c"/><path transform="translate(1020.4 167.9) rotate(450.0)" d="M0 -1.6L1.5 1.2H-1.5Z" fill="#5c5c5c"/><path transform="translate(1025.7 155.2) rotate(495.0)" d="M0 -1.6L1.5 1.2H-1.5Z" fill="#5c5c5c"/></g></svg>
<div class="r" style="left:402px;top:103.5px;width:367px;height:325.5px;background:#f0f0f0;border:1px solid #f4f4f4;box-sizing:border-box;"></div>
<div class="r" style="left:403px;top:104.5px;width:365px;height:20.5px;background:#ffffff;"></div>
<div class="t" style="left:408.0px;top:110.5px;font-size:9.5px;color:#8a8a8a;transform:scaleX(0.926);">Haltungsbeschriftung/-darstellung</div>
<svg style="left:751px;top:109px" width="12" height="12" viewBox="0 0 12 12"><path d="M1 1l10 10M11 1L1 11" stroke="#8a8a8a" stroke-width="0.9"/></svg>
<div class="r" style="left:423px;top:133px;width:64.69999999999999px;height:14.599999999999994px;background:#e5e5e5;border:1px solid #acacac;box-sizing:border-box;"></div>
<div class="t" style="left:426.0px;top:137.0px;font-size:8.5px;color:#1a1a1a;transform:scaleX(0.853);">RZI-Kurz</div>
<svg style="left:474.7px;top:137.3px" width="9" height="6" viewBox="0 0 9 6"><path d="M1 1.2l3.5 3.5 3.5-3.5" stroke="#444" stroke-width="0.9" fill="none"/></svg>
<div class="r" style="left:491.8px;top:133px;width:32.900000000000034px;height:14.599999999999994px;background:#e1e1e1;border:1px solid #adadad;box-sizing:border-box;"></div>
<div class="t" style="left:501.1px;top:137.0px;font-size:8.5px;color:#1a1a1a;transform:scaleX(0.920);">Neu</div>
<div class="r" style="left:501px;top:144px;width:6px;height:1px;background:#1a1a1a;"></div>
<div class="r" style="left:529px;top:133px;width:75.60000000000002px;height:14.599999999999994px;background:#e1e1e1;border:1px solid #adadad;box-sizing:border-box;"></div>
<div class="t" style="left:543.3px;top:137.0px;font-size:8.5px;color:#1a1a1a;transform:scaleX(0.920);">Umbenennen</div>
<div class="r" style="left:543px;top:144px;width:6px;height:1px;background:#1a1a1a;"></div>
<div class="r" style="left:609.4px;top:133px;width:52.30000000000007px;height:14.599999999999994px;background:#e1e1e1;border:1px solid #adadad;box-sizing:border-box;"></div>
<div class="t" style="left:620.8px;top:137.0px;font-size:8.5px;color:#1a1a1a;transform:scaleX(0.920);">Löschen</div>
<div class="r" style="left:621px;top:144px;width:4px;height:1px;background:#1a1a1a;"></div>
<div class="r" style="left:666.8px;top:133px;width:45.90000000000009px;height:14.599999999999994px;background:#e1e1e1;border:1px solid #adadad;box-sizing:border-box;"></div>
<div class="t" style="left:678.7px;top:137.0px;font-size:8.5px;color:#1a1a1a;transform:scaleX(0.920);">Import</div>
<div class="r" style="left:679px;top:144px;width:2px;height:1px;background:#1a1a1a;"></div>
<div class="r" style="left:717px;top:133px;width:46px;height:14.599999999999994px;background:#e1e1e1;border:1px solid #adadad;box-sizing:border-box;"></div>
<div class="t" style="left:728.7px;top:137.0px;font-size:8.5px;color:#1a1a1a;transform:scaleX(0.920);">Export</div>
<div class="r" style="left:729px;top:144px;width:5px;height:1px;background:#1a1a1a;"></div>
<div class="r" style="left:410px;top:157px;width:132.79999999999995px;height:15px;background:#e1e1e1;border:1px solid #adadad;box-sizing:border-box;"></div>
<div class="t" style="left:421.8px;top:161.2px;font-size:8.5px;color:#1a1a1a;transform:scaleX(0.920);">Haltungsfarben und Linienarten</div>
<div class="r" style="left:422px;top:168px;width:6px;height:1px;background:#1a1a1a;"></div>
<div class="r" style="left:408.5px;top:181px;width:134.89999999999998px;height:154px;background:transparent;border:1px solid #dcdcdc;box-sizing:border-box;"></div>
<div class="r" style="left:547.8px;top:156px;width:215.9000000000001px;height:250.5px;background:transparent;border:1px solid #dcdcdc;box-sizing:border-box;"></div>
<div class="r" style="left:408.5px;top:342.7px;width:134.89999999999998px;height:63.80000000000001px;background:transparent;border:1px solid #dcdcdc;box-sizing:border-box;"></div>
<div class="r" style="left:417px;top:188px;width:9px;height:9px;background:#ffffff;border:1px solid #333;box-sizing:border-box;"></div>
<svg style="left:417px;top:188px" width="9" height="9" viewBox="0 0 9 9"><path d="M1.8 4.6l1.9 1.9 3.6-4" stroke="#222" stroke-width="1" fill="none"/></svg>
<div class="r" style="left:430.5px;top:188px;width:8.5px;height:8.5px;background:#ff0000;"></div>
<div class="r" style="left:417px;top:204px;width:9px;height:9px;background:#ffffff;border:1px solid #333;box-sizing:border-box;"></div>
<svg style="left:417px;top:204px" width="9" height="9" viewBox="0 0 9 9"><path d="M1.8 4.6l1.9 1.9 3.6-4" stroke="#222" stroke-width="1" fill="none"/></svg>
<div class="r" style="left:430.5px;top:204px;width:8.5px;height:8.5px;background:#ffffff;"></div>
<div class="r" style="left:417px;top:220px;width:9px;height:9px;background:#ffffff;border:1px solid #333;box-sizing:border-box;"></div>
<svg style="left:417px;top:220px" width="9" height="9" viewBox="0 0 9 9"><path d="M1.8 4.6l1.9 1.9 3.6-4" stroke="#222" stroke-width="1" fill="none"/></svg>
<div class="r" style="left:430.5px;top:221px;width:8.5px;height:8.5px;background:#ffffff;"></div>
<div class="r" style="left:417px;top:237px;width:9px;height:9px;background:#ffffff;border:1px solid #333;box-sizing:border-box;"></div>
<svg style="left:417px;top:237px" width="9" height="9" viewBox="0 0 9 9"><path d="M1.8 4.6l1.9 1.9 3.6-4" stroke="#222" stroke-width="1" fill="none"/></svg>
<div class="r" style="left:430.5px;top:237px;width:8.5px;height:8.5px;background:#ffffff;"></div>
<div class="r" style="left:417px;top:253px;width:9px;height:9px;background:#ffffff;border:1px solid #333;box-sizing:border-box;"></div>
<svg style="left:417px;top:253px" width="9" height="9" viewBox="0 0 9 9"><path d="M1.8 4.6l1.9 1.9 3.6-4" stroke="#222" stroke-width="1" fill="none"/></svg>
<div class="r" style="left:430.5px;top:253px;width:8.5px;height:8.5px;background:#ffffff;"></div>
<div class="r" style="left:417px;top:270px;width:9px;height:9px;background:#ffffff;border:1px solid #333;box-sizing:border-box;"></div>
<svg style="left:417px;top:270px" width="9" height="9" viewBox="0 0 9 9"><path d="M1.8 4.6l1.9 1.9 3.6-4" stroke="#222" stroke-width="1" fill="none"/></svg>
<div class="r" style="left:430.5px;top:270px;width:8.5px;height:8.5px;background:#ffffff;"></div>
<div class="r" style="left:417px;top:286px;width:9px;height:9px;background:#ffffff;border:1px solid #333;box-sizing:border-box;"></div>
<svg style="left:417px;top:286px" width="9" height="9" viewBox="0 0 9 9"><path d="M1.8 4.6l1.9 1.9 3.6-4" stroke="#222" stroke-width="1" fill="none"/></svg>
<div class="r" style="left:430.5px;top:286px;width:8.5px;height:8.5px;background:#ffffff;"></div>
<div class="r" style="left:417px;top:303px;width:9px;height:9px;background:#ffffff;border:1px solid #333;box-sizing:border-box;"></div>
<svg style="left:417px;top:303px" width="9" height="9" viewBox="0 0 9 9"><path d="M1.8 4.6l1.9 1.9 3.6-4" stroke="#222" stroke-width="1" fill="none"/></svg>
<div class="r" style="left:430.5px;top:303px;width:8.5px;height:8.5px;background:#00ffff;"></div>
<div class="r" style="left:417px;top:319px;width:9px;height:9px;background:#ffffff;border:1px solid #333;box-sizing:border-box;"></div>
<svg style="left:417px;top:319px" width="9" height="9" viewBox="0 0 9 9"><path d="M1.8 4.6l1.9 1.9 3.6-4" stroke="#222" stroke-width="1" fill="none"/></svg>
<div class="r" style="left:430.5px;top:319px;width:8.5px;height:8.5px;background:#00ffff;"></div>
<svg style="left:447px;top:186.3px" width="11" height="11" viewBox="0 0 11 11"><circle cx="5.5" cy="5.5" r="4.8" fill="#fff" stroke="#333" stroke-width="0.9"/></svg>
<div class="t" style="left:459.5px;top:188.5px;font-size:8.5px;color:#1a1a1a;transform:scaleX(0.850);">Haltungsbezeichnung</div>
<svg style="left:447px;top:201.5px" width="11" height="11" viewBox="0 0 11 11"><circle cx="5.5" cy="5.5" r="4.8" fill="#fff" stroke="#333" stroke-width="0.9"/></svg>
<div class="t" style="left:459.5px;top:203.7px;font-size:8.5px;color:#1a1a1a;transform:scaleX(0.815);">DN</div>
<svg style="left:447px;top:216.9px" width="11" height="11" viewBox="0 0 11 11"><circle cx="5.5" cy="5.5" r="4.8" fill="#fff" stroke="#333" stroke-width="0.9"/></svg>
<div class="t" style="left:459.5px;top:219.1px;font-size:8.5px;color:#1a1a1a;transform:scaleX(0.859);">Nennweite</div>
<svg style="left:447px;top:232.2px" width="11" height="11" viewBox="0 0 11 11"><circle cx="5.5" cy="5.5" r="4.8" fill="#fff" stroke="#333" stroke-width="0.9"/></svg>
<div class="t" style="left:459.5px;top:234.4px;font-size:8.5px;color:#1a1a1a;transform:scaleX(0.877);">Material</div>
<svg style="left:447px;top:247.5px" width="11" height="11" viewBox="0 0 11 11"><circle cx="5.5" cy="5.5" r="4.8" fill="#fff" stroke="#333" stroke-width="0.9"/></svg>
<div class="t" style="left:459.5px;top:249.7px;font-size:8.5px;color:#1a1a1a;transform:scaleX(0.825);">Länge</div>
<svg style="left:447px;top:262.1px" width="11" height="11" viewBox="0 0 11 11"><circle cx="5.5" cy="5.5" r="4.8" fill="#fff" stroke="#333" stroke-width="0.9"/></svg>
<div class="t" style="left:459.5px;top:264.3px;font-size:8.5px;color:#1a1a1a;transform:scaleX(0.835);">Gefälle</div>
<svg style="left:447px;top:282.5px" width="11" height="11" viewBox="0 0 11 11"><circle cx="5.5" cy="5.5" r="4.8" fill="#fff" stroke="#333" stroke-width="0.9"/></svg>
<div class="t" style="left:459.5px;top:284.7px;font-size:8.5px;color:#1a1a1a;transform:scaleX(0.855);">Fließpfeil</div>
<svg style="left:447px;top:301.7px" width="11" height="11" viewBox="0 0 11 11"><circle cx="5.5" cy="5.5" r="4.8" fill="#fff" stroke="#333" stroke-width="0.9"/></svg>
<div class="t" style="left:459.5px;top:303.9px;font-size:8.5px;color:#1a1a1a;transform:scaleX(0.871);">Von-Sohlhöhe</div>
<svg style="left:447px;top:317.7px" width="11" height="11" viewBox="0 0 11 11"><circle cx="5.5" cy="5.5" r="4.8" fill="#fff" stroke="#333" stroke-width="0.9"/></svg>
<div class="t" style="left:459.5px;top:319.9px;font-size:8.5px;color:#1a1a1a;transform:scaleX(0.841);">Bis-Sohlhöhe</div>
<div class="r" style="left:495px;top:280px;width:39.299999999999955px;height:15.399999999999977px;background:#e1e1e1;border:1px solid #adadad;box-sizing:border-box;"></div>
<div class="t" style="left:510.1px;top:284.4px;font-size:8.5px;color:#1a1a1a;transform:scaleX(0.920);">&gt;&gt;</div>
<div class="t" style="left:415.2px;top:351.6px;font-size:8.5px;color:#1a1a1a;transform:scaleX(0.881);">Schriftgröße</div>
<div class="r" style="left:513.3px;top:347.2px;width:23.5px;height:14.800000000000011px;background:#f0f0f0;border:1px solid #7a7a7a;box-sizing:border-box;"></div>
<div class="t" style="left:415.2px;top:368.9px;font-size:8.5px;color:#1a1a1a;transform:scaleX(0.865);">Präfix</div>
<div class="r" style="left:450px;top:364.8px;width:23.30000000000001px;height:14.699999999999989px;background:#f0f0f0;border:1px solid #7a7a7a;box-sizing:border-box;"></div>
<div class="t" style="left:475.2px;top:368.9px;font-size:8.5px;color:#1a1a1a;transform:scaleX(0.847);">Postfix</div>
<div class="r" style="left:513.3px;top:364.8px;width:23.5px;height:14.699999999999989px;background:#f0f0f0;border:1px solid #7a7a7a;box-sizing:border-box;"></div>
<div class="r" style="left:416px;top:386px;width:9px;height:9px;background:#ffffff;border:1px solid #cfcfcf;box-sizing:border-box;"></div>
<div class="t" style="left:426.7px;top:386.7px;font-size:8.5px;color:#8d8d8d;transform:scaleX(0.865);">kursiv</div>
<div class="t" style="left:450.7px;top:386.7px;font-size:8.5px;color:#1a1a1a;transform:scaleX(0.761);">NKS</div>
<div class="r" style="left:513.3px;top:382px;width:23.5px;height:15px;background:#f0f0f0;border:1px solid #7a7a7a;box-sizing:border-box;"></div>
<svg style="left:553.8px;top:161.8px" width="203.7" height="92.9" viewBox="0 0 203.7 92.9"><rect x="0" y="0" width="203.7" height="92.9" fill="#1c1d21"/><line x1="0.8" y1="0" x2="0.8" y2="93" stroke="#38393d" stroke-width="0.9"/><line x1="14.2" y1="0" x2="14.2" y2="93" stroke="#38393d" stroke-width="0.9"/><line x1="27.6" y1="0" x2="27.6" y2="93" stroke="#38393d" stroke-width="0.9"/><line x1="41.0" y1="0" x2="41.0" y2="93" stroke="#38393d" stroke-width="0.9"/><line x1="54.4" y1="0" x2="54.4" y2="93" stroke="#38393d" stroke-width="0.9"/><line x1="67.8" y1="0" x2="67.8" y2="93" stroke="#38393d" stroke-width="0.9"/><line x1="81.2" y1="0" x2="81.2" y2="93" stroke="#38393d" stroke-width="0.9"/><line x1="94.6" y1="0" x2="94.6" y2="93" stroke="#38393d" stroke-width="0.9"/><line x1="108.0" y1="0" x2="108.0" y2="93" stroke="#38393d" stroke-width="0.9"/><line x1="121.4" y1="0" x2="121.4" y2="93" stroke="#38393d" stroke-width="0.9"/><line x1="134.8" y1="0" x2="134.8" y2="93" stroke="#38393d" stroke-width="0.9"/><line x1="148.2" y1="0" x2="148.2" y2="93" stroke="#38393d" stroke-width="0.9"/><line x1="161.6" y1="0" x2="161.6" y2="93" stroke="#38393d" stroke-width="0.9"/><line x1="175.0" y1="0" x2="175.0" y2="93" stroke="#38393d" stroke-width="0.9"/><line x1="188.4" y1="0" x2="188.4" y2="93" stroke="#38393d" stroke-width="0.9"/><line x1="201.8" y1="0" x2="201.8" y2="93" stroke="#38393d" stroke-width="0.9"/><line x1="0" y1="0.5" x2="204" y2="0.5" stroke="#38393d" stroke-width="0.9"/><line x1="0" y1="7.6" x2="204" y2="7.6" stroke="#38393d" stroke-width="0.9"/><line x1="0" y1="14.7" x2="204" y2="14.7" stroke="#38393d" stroke-width="0.9"/><line x1="0" y1="21.8" x2="204" y2="21.8" stroke="#38393d" stroke-width="0.9"/><line x1="0" y1="28.9" x2="204" y2="28.9" stroke="#38393d" stroke-width="0.9"/><line x1="0" y1="36.0" x2="204" y2="36.0" stroke="#38393d" stroke-width="0.9"/><line x1="0" y1="43.1" x2="204" y2="43.1" stroke="#38393d" stroke-width="0.9"/><line x1="0" y1="50.2" x2="204" y2="50.2" stroke="#38393d" stroke-width="0.9"/><line x1="0" y1="57.3" x2="204" y2="57.3" stroke="#38393d" stroke-width="0.9"/><line x1="0" y1="64.4" x2="204" y2="64.4" stroke="#38393d" stroke-width="0.9"/><line x1="0" y1="71.5" x2="204" y2="71.5" stroke="#38393d" stroke-width="0.9"/><line x1="0" y1="78.6" x2="204" y2="78.6" stroke="#38393d" stroke-width="0.9"/><line x1="0" y1="85.7" x2="204" y2="85.7" stroke="#38393d" stroke-width="0.9"/><line x1="0" y1="92.8" x2="204" y2="92.8" stroke="#38393d" stroke-width="0.9"/><path d="M0.8 -6.6Q7.5 -3.1 14.2 0.5M14.2 -6.6Q7.5 -3.1 0.8 0.5" stroke="#333438" stroke-width="0.8" fill="none"/><path d="M0.8 0.5Q7.5 4.0 14.2 7.6M14.2 0.5Q7.5 4.0 0.8 7.6" stroke="#333438" stroke-width="0.8" fill="none"/><path d="M0.8 7.6Q7.5 11.1 14.2 14.7M14.2 7.6Q7.5 11.1 0.8 14.7" stroke="#333438" stroke-width="0.8" fill="none"/><path d="M0.8 14.7Q7.5 18.2 14.2 21.8M14.2 14.7Q7.5 18.2 0.8 21.8" stroke="#333438" stroke-width="0.8" fill="none"/><path d="M0.8 21.8Q7.5 25.3 14.2 28.9M14.2 21.8Q7.5 25.3 0.8 28.9" stroke="#333438" stroke-width="0.8" fill="none"/><path d="M0.8 28.9Q7.5 32.4 14.2 36.0M14.2 28.9Q7.5 32.4 0.8 36.0" stroke="#333438" stroke-width="0.8" fill="none"/><path d="M0.8 36.0Q7.5 39.5 14.2 43.1M14.2 36.0Q7.5 39.5 0.8 43.1" stroke="#333438" stroke-width="0.8" fill="none"/><path d="M0.8 43.1Q7.5 46.6 14.2 50.2M14.2 43.1Q7.5 46.6 0.8 50.2" stroke="#333438" stroke-width="0.8" fill="none"/><path d="M0.8 50.2Q7.5 53.7 14.2 57.3M14.2 50.2Q7.5 53.7 0.8 57.3" stroke="#333438" stroke-width="0.8" fill="none"/><path d="M0.8 57.3Q7.5 60.8 14.2 64.4M14.2 57.3Q7.5 60.8 0.8 64.4" stroke="#333438" stroke-width="0.8" fill="none"/><path d="M0.8 64.4Q7.5 67.9 14.2 71.5M14.2 64.4Q7.5 67.9 0.8 71.5" stroke="#333438" stroke-width="0.8" fill="none"/><path d="M0.8 71.5Q7.5 75.0 14.2 78.6M14.2 71.5Q7.5 75.0 0.8 78.6" stroke="#333438" stroke-width="0.8" fill="none"/><path d="M0.8 78.6Q7.5 82.1 14.2 85.7M14.2 78.6Q7.5 82.1 0.8 85.7" stroke="#333438" stroke-width="0.8" fill="none"/><path d="M0.8 85.7Q7.5 89.2 14.2 92.8M14.2 85.7Q7.5 89.2 0.8 92.8" stroke="#333438" stroke-width="0.8" fill="none"/><path d="M0.8 92.8Q7.5 96.3 14.2 99.9M14.2 92.8Q7.5 96.3 0.8 99.9" stroke="#333438" stroke-width="0.8" fill="none"/><path d="M0.8 99.9Q7.5 103.4 14.2 107.0M14.2 99.9Q7.5 103.4 0.8 107.0" stroke="#333438" stroke-width="0.8" fill="none"/><path d="M0.8 107.0Q7.5 110.5 14.2 114.1M14.2 107.0Q7.5 110.5 0.8 114.1" stroke="#333438" stroke-width="0.8" fill="none"/><path d="M0.8 114.1Q7.5 117.6 14.2 121.2M14.2 114.1Q7.5 117.6 0.8 121.2" stroke="#333438" stroke-width="0.8" fill="none"/><path d="M14.2 -6.6Q20.9 -3.1 27.6 0.5M27.6 -6.6Q20.9 -3.1 14.2 0.5" stroke="#333438" stroke-width="0.8" fill="none"/><path d="M14.2 0.5Q20.9 4.0 27.6 7.6M27.6 0.5Q20.9 4.0 14.2 7.6" stroke="#333438" stroke-width="0.8" fill="none"/><path d="M14.2 7.6Q20.9 11.1 27.6 14.7M27.6 7.6Q20.9 11.1 14.2 14.7" stroke="#333438" stroke-width="0.8" fill="none"/><path d="M14.2 14.7Q20.9 18.2 27.6 21.8M27.6 14.7Q20.9 18.2 14.2 21.8" stroke="#333438" stroke-width="0.8" fill="none"/><path d="M14.2 21.8Q20.9 25.3 27.6 28.9M27.6 21.8Q20.9 25.3 14.2 28.9" stroke="#333438" stroke-width="0.8" fill="none"/><path d="M14.2 28.9Q20.9 32.4 27.6 36.0M27.6 28.9Q20.9 32.4 14.2 36.0" stroke="#333438" stroke-width="0.8" fill="none"/><path d="M14.2 36.0Q20.9 39.5 27.6 43.1M27.6 36.0Q20.9 39.5 14.2 43.1" stroke="#333438" stroke-width="0.8" fill="none"/><path d="M14.2 43.1Q20.9 46.6 27.6 50.2M27.6 43.1Q20.9 46.6 14.2 50.2" stroke="#333438" stroke-width="0.8" fill="none"/><path d="M14.2 50.2Q20.9 53.7 27.6 57.3M27.6 50.2Q20.9 53.7 14.2 57.3" stroke="#333438" stroke-width="0.8" fill="none"/><path d="M14.2 57.3Q20.9 60.8 27.6 64.4M27.6 57.3Q20.9 60.8 14.2 64.4" stroke="#333438" stroke-width="0.8" fill="none"/><path d="M14.2 64.4Q20.9 67.9 27.6 71.5M27.6 64.4Q20.9 67.9 14.2 71.5" stroke="#333438" stroke-width="0.8" fill="none"/><path d="M14.2 71.5Q20.9 75.0 27.6 78.6M27.6 71.5Q20.9 75.0 14.2 78.6" stroke="#333438" stroke-width="0.8" fill="none"/><path d="M14.2 78.6Q20.9 82.1 27.6 85.7M27.6 78.6Q20.9 82.1 14.2 85.7" stroke="#333438" stroke-width="0.8" fill="none"/><path d="M14.2 85.7Q20.9 89.2 27.6 92.8M27.6 85.7Q20.9 89.2 14.2 92.8" stroke="#333438" stroke-width="0.8" fill="none"/><path d="M14.2 92.8Q20.9 96.3 27.6 99.9M27.6 92.8Q20.9 96.3 14.2 99.9" stroke="#333438" stroke-width="0.8" fill="none"/><path d="M14.2 99.9Q20.9 103.4 27.6 107.0M27.6 99.9Q20.9 103.4 14.2 107.0" stroke="#333438" stroke-width="0.8" fill="none"/><path d="M14.2 107.0Q20.9 110.5 27.6 114.1M27.6 107.0Q20.9 110.5 14.2 114.1" stroke="#333438" stroke-width="0.8" fill="none"/><path d="M14.2 114.1Q20.9 117.6 27.6 121.2M27.6 114.1Q20.9 117.6 14.2 121.2" stroke="#333438" stroke-width="0.8" fill="none"/><path d="M188.4 -6.6Q195.1 -3.1 201.8 0.5M201.8 -6.6Q195.1 -3.1 188.4 0.5" stroke="#333438" stroke-width="0.8" fill="none"/><path d="M188.4 0.5Q195.1 4.0 201.8 7.6M201.8 0.5Q195.1 4.0 188.4 7.6" stroke="#333438" stroke-width="0.8" fill="none"/><path d="M188.4 7.6Q195.1 11.1 201.8 14.7M201.8 7.6Q195.1 11.1 188.4 14.7" stroke="#333438" stroke-width="0.8" fill="none"/><path d="M188.4 14.7Q195.1 18.2 201.8 21.8M201.8 14.7Q195.1 18.2 188.4 21.8" stroke="#333438" stroke-width="0.8" fill="none"/><path d="M188.4 21.8Q195.1 25.3 201.8 28.9M201.8 21.8Q195.1 25.3 188.4 28.9" stroke="#333438" stroke-width="0.8" fill="none"/><path d="M188.4 28.9Q195.1 32.4 201.8 36.0M201.8 28.9Q195.1 32.4 188.4 36.0" stroke="#333438" stroke-width="0.8" fill="none"/><path d="M188.4 36.0Q195.1 39.5 201.8 43.1M201.8 36.0Q195.1 39.5 188.4 43.1" stroke="#333438" stroke-width="0.8" fill="none"/><path d="M188.4 43.1Q195.1 46.6 201.8 50.2M201.8 43.1Q195.1 46.6 188.4 50.2" stroke="#333438" stroke-width="0.8" fill="none"/><path d="M188.4 50.2Q195.1 53.7 201.8 57.3M201.8 50.2Q195.1 53.7 188.4 57.3" stroke="#333438" stroke-width="0.8" fill="none"/><path d="M188.4 57.3Q195.1 60.8 201.8 64.4M201.8 57.3Q195.1 60.8 188.4 64.4" stroke="#333438" stroke-width="0.8" fill="none"/><path d="M188.4 64.4Q195.1 67.9 201.8 71.5M201.8 64.4Q195.1 67.9 188.4 71.5" stroke="#333438" stroke-width="0.8" fill="none"/><path d="M188.4 71.5Q195.1 75.0 201.8 78.6M201.8 71.5Q195.1 75.0 188.4 78.6" stroke="#333438" stroke-width="0.8" fill="none"/><path d="M188.4 78.6Q195.1 82.1 201.8 85.7M201.8 78.6Q195.1 82.1 188.4 85.7" stroke="#333438" stroke-width="0.8" fill="none"/><path d="M188.4 85.7Q195.1 89.2 201.8 92.8M201.8 85.7Q195.1 89.2 188.4 92.8" stroke="#333438" stroke-width="0.8" fill="none"/><path d="M188.4 92.8Q195.1 96.3 201.8 99.9M201.8 92.8Q195.1 96.3 188.4 99.9" stroke="#333438" stroke-width="0.8" fill="none"/><path d="M188.4 99.9Q195.1 103.4 201.8 107.0M201.8 99.9Q195.1 103.4 188.4 107.0" stroke="#333438" stroke-width="0.8" fill="none"/><path d="M188.4 107.0Q195.1 110.5 201.8 114.1M201.8 107.0Q195.1 110.5 188.4 114.1" stroke="#333438" stroke-width="0.8" fill="none"/><path d="M188.4 114.1Q195.1 117.6 201.8 121.2M201.8 114.1Q195.1 117.6 188.4 121.2" stroke="#333438" stroke-width="0.8" fill="none"/><path d="M201.8 -6.6Q208.5 -3.1 215.2 0.5M215.2 -6.6Q208.5 -3.1 201.8 0.5" stroke="#333438" stroke-width="0.8" fill="none"/><path d="M201.8 0.5Q208.5 4.0 215.2 7.6M215.2 0.5Q208.5 4.0 201.8 7.6" stroke="#333438" stroke-width="0.8" fill="none"/><path d="M201.8 7.6Q208.5 11.1 215.2 14.7M215.2 7.6Q208.5 11.1 201.8 14.7" stroke="#333438" stroke-width="0.8" fill="none"/><path d="M201.8 14.7Q208.5 18.2 215.2 21.8M215.2 14.7Q208.5 18.2 201.8 21.8" stroke="#333438" stroke-width="0.8" fill="none"/><path d="M201.8 21.8Q208.5 25.3 215.2 28.9M215.2 21.8Q208.5 25.3 201.8 28.9" stroke="#333438" stroke-width="0.8" fill="none"/><path d="M201.8 28.9Q208.5 32.4 215.2 36.0M215.2 28.9Q208.5 32.4 201.8 36.0" stroke="#333438" stroke-width="0.8" fill="none"/><path d="M201.8 36.0Q208.5 39.5 215.2 43.1M215.2 36.0Q208.5 39.5 201.8 43.1" stroke="#333438" stroke-width="0.8" fill="none"/><path d="M201.8 43.1Q208.5 46.6 215.2 50.2M215.2 43.1Q208.5 46.6 201.8 50.2" stroke="#333438" stroke-width="0.8" fill="none"/><path d="M201.8 50.2Q208.5 53.7 215.2 57.3M215.2 50.2Q208.5 53.7 201.8 57.3" stroke="#333438" stroke-width="0.8" fill="none"/><path d="M201.8 57.3Q208.5 60.8 215.2 64.4M215.2 57.3Q208.5 60.8 201.8 64.4" stroke="#333438" stroke-width="0.8" fill="none"/><path d="M201.8 64.4Q208.5 67.9 215.2 71.5M215.2 64.4Q208.5 67.9 201.8 71.5" stroke="#333438" stroke-width="0.8" fill="none"/><path d="M201.8 71.5Q208.5 75.0 215.2 78.6M215.2 71.5Q208.5 75.0 201.8 78.6" stroke="#333438" stroke-width="0.8" fill="none"/><path d="M201.8 78.6Q208.5 82.1 215.2 85.7M215.2 78.6Q208.5 82.1 201.8 85.7" stroke="#333438" stroke-width="0.8" fill="none"/><path d="M201.8 85.7Q208.5 89.2 215.2 92.8M215.2 85.7Q208.5 89.2 201.8 92.8" stroke="#333438" stroke-width="0.8" fill="none"/><path d="M201.8 92.8Q208.5 96.3 215.2 99.9M215.2 92.8Q208.5 96.3 201.8 99.9" stroke="#333438" stroke-width="0.8" fill="none"/><path d="M201.8 99.9Q208.5 103.4 215.2 107.0M215.2 99.9Q208.5 103.4 201.8 107.0" stroke="#333438" stroke-width="0.8" fill="none"/><path d="M201.8 107.0Q208.5 110.5 215.2 114.1M215.2 107.0Q208.5 110.5 201.8 114.1" stroke="#333438" stroke-width="0.8" fill="none"/><path d="M201.8 114.1Q208.5 117.6 215.2 121.2M215.2 114.1Q208.5 117.6 201.8 121.2" stroke="#333438" stroke-width="0.8" fill="none"/><polygon points="26.9,50.1 21.0,56.0 12.8,56.0 6.9,50.1 6.9,41.9 12.8,36.0 21.0,36.0 26.9,41.9" fill="none" stroke="#c0c0c0" stroke-width="0.9"/><polygon points="194.6,50.1 188.7,56.0 180.5,56.0 174.6,50.1 174.6,41.9 180.5,36.0 188.7,36.0 194.6,41.9" fill="none" stroke="#c0c0c0" stroke-width="0.9"/><path d="M27.200000000000045 42.5H174.20000000000005M27.200000000000045 49.5H174.20000000000005" stroke="#b4b4b4" stroke-width="1.1"/><rect x="81.7" y="22.5" width="11.2" height="5.2" fill="#fff"/><rect x="95.2" y="22.5" width="11.5" height="5.2" fill="#fff"/><rect x="108.7" y="22.5" width="11.5" height="5.2" fill="#fff"/><rect x="95.2" y="29.2" width="11.5" height="5.0" fill="#fff"/><rect x="95.2" y="36.2" width="11.5" height="5.0" fill="#fff"/><rect x="95.2" y="50.2" width="11.5" height="5.0" fill="#fff"/><rect x="95.2" y="57.2" width="11.5" height="5.0" fill="#ff0000"/><rect x="28.2" y="50.2" width="11.2" height="5.0" fill="#00ffff"/><rect x="161.9" y="50.2" width="11.3" height="5.0" fill="#00ffff"/></svg>
<svg style="left:649px;top:273px" width="12" height="10" viewBox="0 0 12 10"><path d="M1.5 5.5l4.5-4 4.5 4M1.5 9l4.5-4 4.5 4" stroke="#555" stroke-width="0.9" fill="none"/></svg>
<svg style="left:601px;top:304px" width="11" height="12" viewBox="0 0 11 12"><path d="M5.5 1.5l-4 4.5 4 4.5M9 1.5l-4 4.5 4 4.5" stroke="#555" stroke-width="0.9" fill="none"/></svg>
<div class="r" style="left:585px;top:358.7px;width:9px;height:9px;background:#ffffff;border:1px solid #333;box-sizing:border-box;"></div>
<svg style="left:585px;top:358.7px" width="9" height="9" viewBox="0 0 9 9"><path d="M1.8 4.6l1.9 1.9 3.6-4" stroke="#222" stroke-width="1" fill="none"/></svg>
<div class="t" style="left:596.0px;top:359.7px;font-size:8.5px;color:#1a1a1a;transform:scaleX(0.920);">Elemente</div>
<div class="t" style="left:553.9px;top:374.4px;font-size:8.5px;color:#1a1a1a;transform:scaleX(0.813);">Zeilenabstand (in Einheiten)</div>
<div class="t" style="left:553.9px;top:391.9px;font-size:8.5px;color:#1a1a1a;transform:scaleX(0.741);">Haltungsabstand (in Einheiten)</div>
<div class="r" style="left:408px;top:410.8px;width:179px;height:14.5px;background:#e1e1e1;border:1px solid #c8c8c8;box-sizing:border-box;"></div>
<div class="t" style="left:482.9px;top:414.8px;font-size:8.5px;color:#1a1a1a;transform:scaleX(0.920);">Abbruch</div>
<div class="r" style="left:483px;top:422px;width:5px;height:1px;background:#1a1a1a;"></div>
<div class="r" style="left:592px;top:410.8px;width:168px;height:14.5px;background:#e1e1e1;border:1px solid #c8c8c8;box-sizing:border-box;"></div>
<div class="t" style="left:670.4px;top:414.8px;font-size:8.5px;color:#1a1a1a;transform:scaleX(0.920);">OK</div>
<div class="r" style="left:620px;top:303px;width:391px;height:190px;background:#f0f0f0;border:1px solid #fafafa;box-sizing:border-box;box-shadow:0 0 5px rgba(0,0,0,0.3);"></div>
<div class="r" style="left:621px;top:304px;width:389px;height:22px;background:#ffffff;"></div>
<div class="t" style="left:626.0px;top:310.7px;font-size:9.5px;color:#2a2a2a;transform:scaleX(0.895);">Farben &amp;&amp; Linienarten...</div>
<svg style="left:993px;top:309.5px" width="11" height="11" viewBox="0 0 11 11"><path d="M1 1l9 9M10 1L1 10" stroke="#333" stroke-width="1"/></svg>
<div class="r" style="left:624.4px;top:331.8px;width:383.6px;height:139.0px;background:transparent;border:1px solid #dcdcdc;box-sizing:border-box;"></div>
<div class="r" style="left:632.3px;top:337.2px;width:63.700000000000045px;height:15.0px;background:#f0f0f0;border:1px solid #828282;box-sizing:border-box;"></div>
<div class="r" style="left:701px;top:337.2px;width:96.60000000000002px;height:15.0px;background:#f0f0f0;border:1px solid #828282;box-sizing:border-box;"></div>
<div class="t" style="left:704.0px;top:339.9px;font-size:8.5px;color:#8a8a8a;transform:scaleX(0.920);">Mischwasser</div>
<div class="r" style="left:802.3px;top:337.2px;width:96.60000000000002px;height:15.0px;background:#f0f0f0;border:1px solid #828282;box-sizing:border-box;"></div>
<div class="t" style="left:805.3px;top:339.9px;font-size:8.5px;color:#8a8a8a;transform:scaleX(0.920);">Regenwasser</div>
<div class="r" style="left:904.2px;top:337.2px;width:96.59999999999991px;height:15.0px;background:#f0f0f0;border:1px solid #828282;box-sizing:border-box;"></div>
<div class="t" style="left:907.2px;top:339.9px;font-size:8.5px;color:#8a8a8a;transform:scaleX(0.920);">Schmutzwasser</div>
<div class="r" style="left:631.2px;top:360.8px;width:63.69999999999993px;height:15.0px;background:#f0f0f0;border:1px solid #828282;box-sizing:border-box;"></div>
<div class="r" style="left:632.2px;top:361.8px;width:62px;height:13px;overflow:hidden"><div class="t" style="left:2.0px;top:2.0px;font-size:8.5px;color:#8a8a8a;transform:scaleX(0.920);">vorhanden</div></div>
<div class="r" style="left:700.3px;top:361px;width:11.8px;height:14px;background:#ff00ff;"></div>
<div class="r" style="left:731.8px;top:361.3px;width:65.10000000000002px;height:13.8px;background:#e3e3e3;border:1px solid #adadad;box-sizing:border-box;"></div>
<div class="r" style="left:733.8px;top:362.3px;width:49.6px;height:12px;overflow:hidden"><div class="t" style="left:0.3px;top:2.9px;font-size:8.5px;color:#1a1a1a;transform:scaleX(0.860);">Continuous</div></div>
<svg style="left:786.9px;top:365.8px" width="8" height="5" viewBox="0 0 8 5"><path d="M0.8 0.8l3.2 3.2 3.2-3.2" stroke="#555" stroke-width="0.9" fill="none"/></svg>
<div class="r" style="left:802.3px;top:361px;width:11.8px;height:14px;background:#0022ff;"></div>
<div class="r" style="left:833.7px;top:361.3px;width:65.19999999999993px;height:13.8px;background:#e3e3e3;border:1px solid #adadad;box-sizing:border-box;"></div>
<div class="r" style="left:835.7px;top:362.3px;width:49.7px;height:12px;overflow:hidden"><div class="t" style="left:0.3px;top:2.9px;font-size:8.5px;color:#1a1a1a;transform:scaleX(0.860);">Continuous</div></div>
<svg style="left:888.9px;top:365.8px" width="8" height="5" viewBox="0 0 8 5"><path d="M0.8 0.8l3.2 3.2 3.2-3.2" stroke="#555" stroke-width="0.9" fill="none"/></svg>
<div class="r" style="left:904.2px;top:361px;width:11.8px;height:14px;background:#a0604c;"></div>
<div class="r" style="left:935.7px;top:361.3px;width:65.09999999999991px;height:13.8px;background:#e3e3e3;border:1px solid #adadad;box-sizing:border-box;"></div>
<div class="r" style="left:937.7px;top:362.3px;width:49.6px;height:12px;overflow:hidden"><div class="t" style="left:0.3px;top:2.9px;font-size:8.5px;color:#1a1a1a;transform:scaleX(0.860);">Continuous</div></div>
<svg style="left:990.8px;top:365.8px" width="8" height="5" viewBox="0 0 8 5"><path d="M0.8 0.8l3.2 3.2 3.2-3.2" stroke="#555" stroke-width="0.9" fill="none"/></svg>
<div class="r" style="left:631.2px;top:381.6px;width:63.69999999999993px;height:15.0px;background:#f0f0f0;border:1px solid #828282;box-sizing:border-box;"></div>
<div class="r" style="left:632.2px;top:382.6px;width:62px;height:13px;overflow:hidden"><div class="t" style="left:2.0px;top:2.0px;font-size:8.5px;color:#8a8a8a;transform:scaleX(0.920);">geplant</div></div>
<div class="r" style="left:700.3px;top:382px;width:11.8px;height:14px;background:#ff00ff;"></div>
<div class="r" style="left:731.8px;top:382.1px;width:65.10000000000002px;height:13.8px;background:#e3e3e3;border:1px solid #adadad;box-sizing:border-box;"></div>
<div class="r" style="left:733.8px;top:383.1px;width:49.6px;height:12px;overflow:hidden"><div class="t" style="left:0.3px;top:2.9px;font-size:8.5px;color:#1a1a1a;transform:scaleX(0.860);">ACAD_ISO02W100</div></div>
<svg style="left:786.9px;top:386.6px" width="8" height="5" viewBox="0 0 8 5"><path d="M0.8 0.8l3.2 3.2 3.2-3.2" stroke="#555" stroke-width="0.9" fill="none"/></svg>
<div class="r" style="left:802.3px;top:382px;width:11.8px;height:14px;background:#0022ff;"></div>
<div class="r" style="left:833.7px;top:382.1px;width:65.19999999999993px;height:13.8px;background:#e3e3e3;border:1px solid #adadad;box-sizing:border-box;"></div>
<div class="r" style="left:835.7px;top:383.1px;width:49.7px;height:12px;overflow:hidden"><div class="t" style="left:0.3px;top:2.9px;font-size:8.5px;color:#1a1a1a;transform:scaleX(0.860);">ACAD_ISO02W100</div></div>
<svg style="left:888.9px;top:386.6px" width="8" height="5" viewBox="0 0 8 5"><path d="M0.8 0.8l3.2 3.2 3.2-3.2" stroke="#555" stroke-width="0.9" fill="none"/></svg>
<div class="r" style="left:904.2px;top:382px;width:11.8px;height:14px;background:#a0604c;"></div>
<div class="r" style="left:935.7px;top:382.1px;width:65.09999999999991px;height:13.8px;background:#e3e3e3;border:1px solid #adadad;box-sizing:border-box;"></div>
<div class="r" style="left:937.7px;top:383.1px;width:49.6px;height:12px;overflow:hidden"><div class="t" style="left:0.3px;top:2.9px;font-size:8.5px;color:#1a1a1a;transform:scaleX(0.860);">ACAD_ISO02W100</div></div>
<svg style="left:990.8px;top:386.6px" width="8" height="5" viewBox="0 0 8 5"><path d="M0.8 0.8l3.2 3.2 3.2-3.2" stroke="#555" stroke-width="0.9" fill="none"/></svg>
<div class="r" style="left:631.2px;top:402.7px;width:63.69999999999993px;height:15.0px;background:#f0f0f0;border:1px solid #828282;box-sizing:border-box;"></div>
<div class="r" style="left:632.2px;top:403.7px;width:62px;height:13px;overflow:hidden"><div class="t" style="left:2.0px;top:2.0px;font-size:8.5px;color:#8a8a8a;transform:scaleX(0.920);">fiktiv</div></div>
<div class="r" style="left:700.3px;top:403px;width:11.8px;height:14px;background:#ff00ff;"></div>
<div class="r" style="left:731.8px;top:403.2px;width:65.10000000000002px;height:13.8px;background:#e3e3e3;border:1px solid #adadad;box-sizing:border-box;"></div>
<div class="r" style="left:733.8px;top:404.2px;width:49.6px;height:12px;overflow:hidden"><div class="t" style="left:0.3px;top:2.9px;font-size:8.5px;color:#1a1a1a;transform:scaleX(0.860);">ACAD_ISO07W100</div></div>
<svg style="left:786.9px;top:407.7px" width="8" height="5" viewBox="0 0 8 5"><path d="M0.8 0.8l3.2 3.2 3.2-3.2" stroke="#555" stroke-width="0.9" fill="none"/></svg>
<div class="r" style="left:802.3px;top:403px;width:11.8px;height:14px;background:#0022ff;"></div>
<div class="r" style="left:833.7px;top:403.2px;width:65.19999999999993px;height:13.8px;background:#e3e3e3;border:1px solid #adadad;box-sizing:border-box;"></div>
<div class="r" style="left:835.7px;top:404.2px;width:49.7px;height:12px;overflow:hidden"><div class="t" style="left:0.3px;top:2.9px;font-size:8.5px;color:#1a1a1a;transform:scaleX(0.860);">ACAD_ISO07W100</div></div>
<svg style="left:888.9px;top:407.7px" width="8" height="5" viewBox="0 0 8 5"><path d="M0.8 0.8l3.2 3.2 3.2-3.2" stroke="#555" stroke-width="0.9" fill="none"/></svg>
<div class="r" style="left:904.2px;top:403px;width:11.8px;height:14px;background:#a0604c;"></div>
<div class="r" style="left:935.7px;top:403.2px;width:65.09999999999991px;height:13.8px;background:#e3e3e3;border:1px solid #adadad;box-sizing:border-box;"></div>
<div class="r" style="left:937.7px;top:404.2px;width:49.6px;height:12px;overflow:hidden"><div class="t" style="left:0.3px;top:2.9px;font-size:8.5px;color:#1a1a1a;transform:scaleX(0.860);">ACAD_ISO07W100</div></div>
<svg style="left:990.8px;top:407.7px" width="8" height="5" viewBox="0 0 8 5"><path d="M0.8 0.8l3.2 3.2 3.2-3.2" stroke="#555" stroke-width="0.9" fill="none"/></svg>
<div class="r" style="left:631.2px;top:423.5px;width:63.69999999999993px;height:15.0px;background:#f0f0f0;border:1px solid #828282;box-sizing:border-box;"></div>
<div class="r" style="left:632.2px;top:424.5px;width:62px;height:13px;overflow:hidden"><div class="t" style="left:2.0px;top:2.0px;font-size:8.5px;color:#8a8a8a;transform:scaleX(0.920);">außer Betrieb</div></div>
<div class="r" style="left:700.3px;top:424px;width:11.8px;height:14px;background:#ff00ff;"></div>
<div class="r" style="left:731.8px;top:424px;width:65.10000000000002px;height:13.8px;background:#e3e3e3;border:1px solid #adadad;box-sizing:border-box;"></div>
<div class="r" style="left:733.8px;top:425.0px;width:49.6px;height:12px;overflow:hidden"><div class="t" style="left:0.3px;top:2.9px;font-size:8.5px;color:#1a1a1a;transform:scaleX(0.860);">ACAD_ISO10W100</div></div>
<svg style="left:786.9px;top:428.5px" width="8" height="5" viewBox="0 0 8 5"><path d="M0.8 0.8l3.2 3.2 3.2-3.2" stroke="#555" stroke-width="0.9" fill="none"/></svg>
<div class="r" style="left:802.3px;top:424px;width:11.8px;height:14px;background:#0022ff;"></div>
<div class="r" style="left:833.7px;top:424px;width:65.19999999999993px;height:13.8px;background:#e3e3e3;border:1px solid #adadad;box-sizing:border-box;"></div>
<div class="r" style="left:835.7px;top:425.0px;width:49.7px;height:12px;overflow:hidden"><div class="t" style="left:0.3px;top:2.9px;font-size:8.5px;color:#1a1a1a;transform:scaleX(0.860);">ACAD_ISO10W100</div></div>
<svg style="left:888.9px;top:428.5px" width="8" height="5" viewBox="0 0 8 5"><path d="M0.8 0.8l3.2 3.2 3.2-3.2" stroke="#555" stroke-width="0.9" fill="none"/></svg>
<div class="r" style="left:904.2px;top:424px;width:11.8px;height:14px;background:#a0604c;"></div>
<div class="r" style="left:935.7px;top:424px;width:65.09999999999991px;height:13.8px;background:#e3e3e3;border:1px solid #adadad;box-sizing:border-box;"></div>
<div class="r" style="left:937.7px;top:425.0px;width:49.6px;height:12px;overflow:hidden"><div class="t" style="left:0.3px;top:2.9px;font-size:8.5px;color:#1a1a1a;transform:scaleX(0.860);">ACAD_ISO10W100</div></div>
<svg style="left:990.8px;top:428.5px" width="8" height="5" viewBox="0 0 8 5"><path d="M0.8 0.8l3.2 3.2 3.2-3.2" stroke="#555" stroke-width="0.9" fill="none"/></svg>
<div class="r" style="left:631.2px;top:444.9px;width:63.69999999999993px;height:15.0px;background:#f0f0f0;border:1px solid #828282;box-sizing:border-box;"></div>
<div class="r" style="left:632.2px;top:445.9px;width:62px;height:13px;overflow:hidden"><div class="t" style="left:2.0px;top:2.0px;font-size:8.5px;color:#8a8a8a;transform:scaleX(0.917);">verdämmt/verfüllt</div></div>
<div class="r" style="left:700.3px;top:445px;width:11.8px;height:14px;background:#ff00ff;"></div>
<div class="r" style="left:731.8px;top:445.4px;width:65.10000000000002px;height:13.8px;background:#e3e3e3;border:1px solid #adadad;box-sizing:border-box;"></div>
<div class="r" style="left:733.8px;top:446.4px;width:49.6px;height:12px;overflow:hidden"><div class="t" style="left:0.3px;top:2.9px;font-size:8.5px;color:#1a1a1a;transform:scaleX(0.860);">ACAD_ISO12W100</div></div>
<svg style="left:786.9px;top:449.9px" width="8" height="5" viewBox="0 0 8 5"><path d="M0.8 0.8l3.2 3.2 3.2-3.2" stroke="#555" stroke-width="0.9" fill="none"/></svg>
<div class="r" style="left:802.3px;top:445px;width:11.8px;height:14px;background:#0022ff;"></div>
<div class="r" style="left:833.7px;top:445.4px;width:65.19999999999993px;height:13.8px;background:#e3e3e3;border:1px solid #adadad;box-sizing:border-box;"></div>
<div class="r" style="left:835.7px;top:446.4px;width:49.7px;height:12px;overflow:hidden"><div class="t" style="left:0.3px;top:2.9px;font-size:8.5px;color:#1a1a1a;transform:scaleX(0.860);">ACAD_ISO12W100</div></div>
<svg style="left:888.9px;top:449.9px" width="8" height="5" viewBox="0 0 8 5"><path d="M0.8 0.8l3.2 3.2 3.2-3.2" stroke="#555" stroke-width="0.9" fill="none"/></svg>
<div class="r" style="left:904.2px;top:445px;width:11.8px;height:14px;background:#a0604c;"></div>
<div class="r" style="left:935.7px;top:445.4px;width:65.09999999999991px;height:13.8px;background:#e3e3e3;border:1px solid #adadad;box-sizing:border-box;"></div>
<div class="r" style="left:937.7px;top:446.4px;width:49.6px;height:12px;overflow:hidden"><div class="t" style="left:0.3px;top:2.9px;font-size:8.5px;color:#1a1a1a;transform:scaleX(0.860);">ACAD_ISO12W100</div></div>
<svg style="left:990.8px;top:449.9px" width="8" height="5" viewBox="0 0 8 5"><path d="M0.8 0.8l3.2 3.2 3.2-3.2" stroke="#555" stroke-width="0.9" fill="none"/></svg>
<div class="r" style="left:626.5px;top:475px;width:208.0px;height:14.600000000000023px;background:#e1e1e1;border:1px solid #c4c4c4;box-sizing:border-box;"></div>
<div class="t" style="left:711.6px;top:479.0px;font-size:8.5px;color:#1a1a1a;transform:scaleX(0.920);">Abbrechen</div>
<div class="r" style="left:712px;top:486px;width:5px;height:1px;background:#1a1a1a;"></div>
<div class="r" style="left:839.8px;top:475px;width:66.90000000000009px;height:14.600000000000023px;background:#e1e1e1;border:1px solid #c4c4c4;box-sizing:border-box;"></div>
<div class="t" style="left:871.1px;top:479.0px;font-size:8.5px;color:#1a1a1a;transform:scaleX(0.920);">?</div>
<div class="r" style="left:912px;top:475px;width:93.29999999999995px;height:15.5px;background:#e1e1e1;border:2px solid #0078d7;box-sizing:border-box;"></div>
<div class="t" style="left:953.0px;top:479.5px;font-size:8.5px;color:#1a1a1a;transform:scaleX(0.920);">OK</div>
<div class="r" style="left:953px;top:486px;width:6px;height:1px;background:#1a1a1a;"></div>
</body></html>
